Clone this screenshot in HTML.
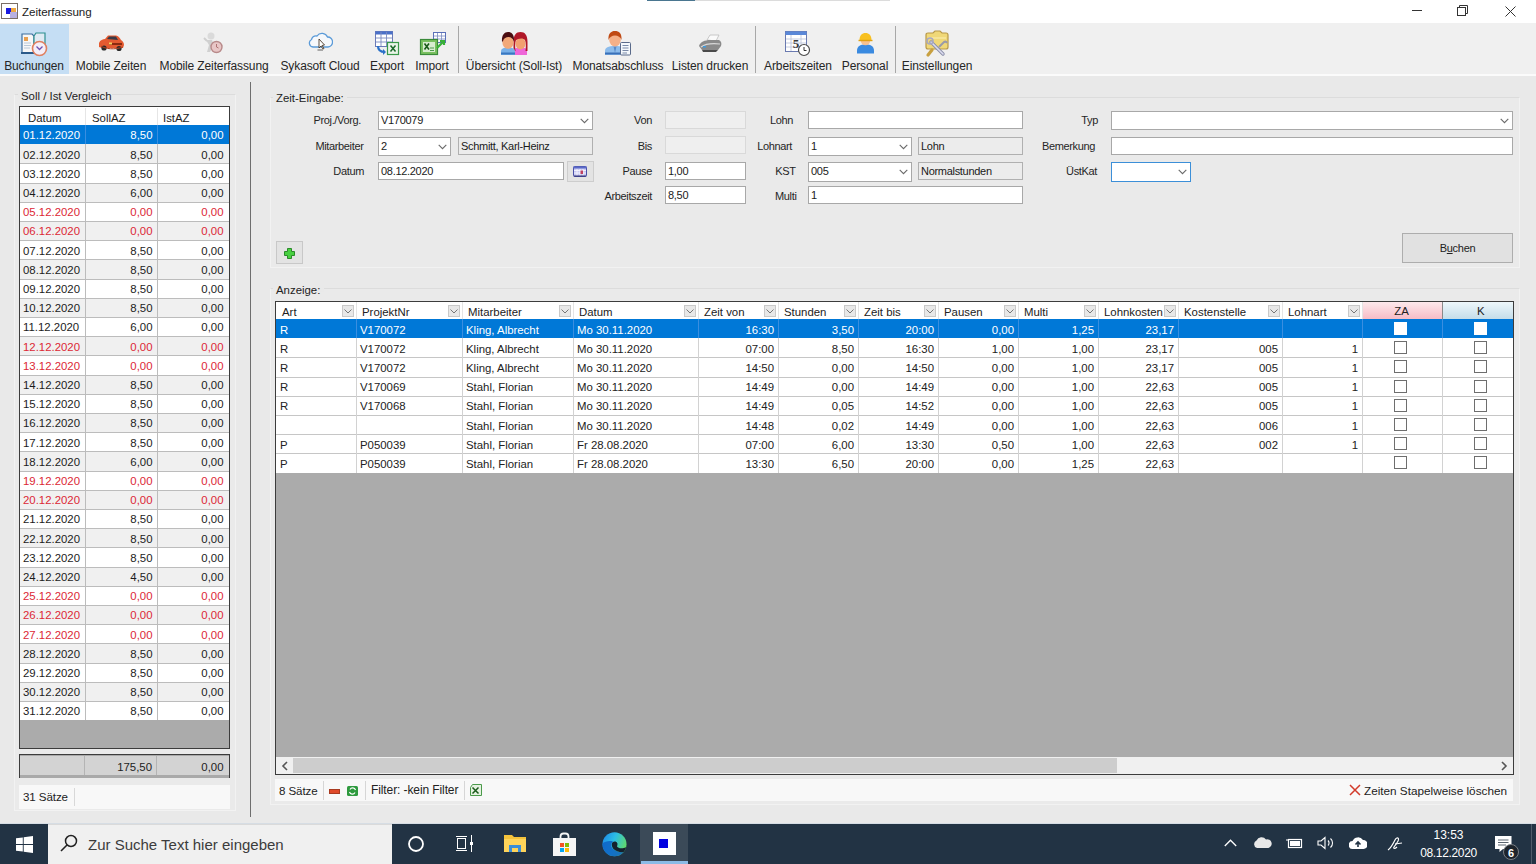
<!DOCTYPE html>
<html><head><meta charset="utf-8">
<style>
*{box-sizing:border-box;margin:0;padding:0}
html,body{width:1536px;height:864px;overflow:hidden;background:#e9e9e9;font-family:"Liberation Sans",sans-serif;color:#1a1a1a}
.a{position:absolute}
.t{position:absolute;white-space:nowrap}
</style></head><body>

<div class="a" style="left:0px;top:0px;width:1536px;height:23px;background:#fff"></div>
<div class="a" style="left:647px;top:0px;width:48px;height:1px;background:#4a7690"></div>
<div class="a" style="left:695px;top:0px;width:195px;height:1px;background:#dcdcdc"></div>
<div class="a" style="left:1px;top:3px;width:17px;height:16px;border:1px solid #7a6e66;background:#fff"></div>
<div class="a" style="left:6px;top:8px;width:5px;height:6px;background:#1a1ae0"></div>
<div class="a" style="left:11px;top:8px;width:5px;height:4px;background:#f0a840"></div>
<div class="a" style="left:10px;top:12px;width:7px;height:6px;background:#b8b0e0"></div>
<div class="t" style="left:22px;top:4.98px;font-size:11.6px;line-height:14px;color:#222;letter-spacing:-0.05px">Zeiterfassung</div>
<div class="a" style="left:1412px;top:10px;width:10px;height:1px;background:#333"></div>
<svg class="a" style="left:1457px;top:5px;" width="12" height="12" viewBox="0 0 12 12"><rect x="0.5" y="2.5" width="8" height="8" fill="none" stroke="#333"/><path d="M2.5 2.5V0.5H10.5V8.5H8.5" fill="none" stroke="#333"/></svg>
<svg class="a" style="left:1505px;top:6px;" width="11" height="11" viewBox="0 0 11 11"><path d="M0.5 0.5L10.5 10.5M10.5 0.5L0.5 10.5" stroke="#333" stroke-width="1"/></svg>
<div class="a" style="left:0px;top:23px;width:1536px;height:51px;background:#f0f0f0"></div>
<div class="a" style="left:0px;top:24px;width:69px;height:50px;background:#c5def4"></div>
<div class="a" style="left:0px;top:74px;width:1536px;height:2px;background:#fbfbfb"></div>
<div class="a" style="left:458px;top:26px;width:1px;height:47px;background:#a8a8a8"></div>
<div class="a" style="left:755px;top:26px;width:1px;height:47px;background:#a8a8a8"></div>
<div class="a" style="left:895px;top:26px;width:1px;height:47px;background:#a8a8a8"></div>
<div class="t" style="left:-36.0px;width:140px;text-align:center;top:58.84px;font-size:12px;line-height:15px;color:#262626;letter-spacing:-0.12px">Buchungen</div>
<div class="t" style="left:41.0px;width:140px;text-align:center;top:58.84px;font-size:12px;line-height:15px;color:#262626;letter-spacing:-0.12px">Mobile Zeiten</div>
<div class="t" style="left:144.0px;width:140px;text-align:center;top:58.84px;font-size:12px;line-height:15px;color:#262626;letter-spacing:-0.12px">Mobile Zeiterfassung</div>
<div class="t" style="left:250.0px;width:140px;text-align:center;top:58.84px;font-size:12px;line-height:15px;color:#262626;letter-spacing:-0.12px">Sykasoft Cloud</div>
<div class="t" style="left:317.0px;width:140px;text-align:center;top:58.84px;font-size:12px;line-height:15px;color:#262626;letter-spacing:-0.12px">Export</div>
<div class="t" style="left:362.0px;width:140px;text-align:center;top:58.84px;font-size:12px;line-height:15px;color:#262626;letter-spacing:-0.12px">Import</div>
<div class="t" style="left:444.0px;width:140px;text-align:center;top:58.84px;font-size:12px;line-height:15px;color:#262626;letter-spacing:-0.12px">Übersicht (Soll-Ist)</div>
<div class="t" style="left:548.0px;width:140px;text-align:center;top:58.84px;font-size:12px;line-height:15px;color:#262626;letter-spacing:-0.12px">Monatsabschluss</div>
<div class="t" style="left:640.0px;width:140px;text-align:center;top:58.84px;font-size:12px;line-height:15px;color:#262626;letter-spacing:-0.12px">Listen drucken</div>
<div class="t" style="left:728.0px;width:140px;text-align:center;top:58.84px;font-size:12px;line-height:15px;color:#262626;letter-spacing:-0.12px">Arbeitszeiten</div>
<div class="t" style="left:795.0px;width:140px;text-align:center;top:58.84px;font-size:12px;line-height:15px;color:#262626;letter-spacing:-0.12px">Personal</div>
<div class="t" style="left:867.0px;width:140px;text-align:center;top:58.84px;font-size:12px;line-height:15px;color:#262626;letter-spacing:-0.12px">Einstellungen</div>
<svg class="a" style="left:20px;top:31px" width="28" height="26" viewBox="0 0 28 26">
 <path d="M2 3H12L14 5V22H2Z" fill="#f7f7f7" stroke="#3d6e9e" stroke-width="1.2"/>
 <path d="M14 5L16 2H25V20H14Z" fill="#dfeaf3" stroke="#2f8f8f" stroke-width="1.2"/>
 <path d="M1 22H14" stroke="#2a5a8a" stroke-width="2"/>
 <rect x="4" y="6" width="4" height="4" fill="#e8a050"/>
 <path d="M4 12H11M4 14.5H11M4 17H10" stroke="#b8c8d8" stroke-width="1"/>
 <circle cx="19.5" cy="17.5" r="7" fill="#f4eef8" stroke="#e08060" stroke-width="1.6"/>
 <path d="M16.5 15.5L19.5 18.5L22.5 15.5" fill="none" stroke="#7050b0" stroke-width="1.3"/>
</svg>
<svg class="a" style="left:97px;top:34px" width="28" height="18" viewBox="0 0 28 18">
 <path d="M2 9C3 6 6 5 8 5L11 1.5H19C21 1.5 23 4 24 6C26 7 27 9 27 11L26 14H5L2 13Z" fill="#e45a30"/>
 <path d="M10 5L12 2.5H19L21 6Z" fill="#3a3a48"/>
 <path d="M12 9H25V11H12Z" fill="#8a2a10"/>
 <rect x="12" y="8.5" width="3" height="2" fill="#f4d060"/>
 <circle cx="7" cy="14" r="2.6" fill="#2a2a2a"/><circle cx="22" cy="14.5" r="2.6" fill="#2a2a2a"/>
 <path d="M4 12C8 15 18 16 26 13" fill="none" stroke="#b04020" stroke-width="1"/>
</svg>
<svg class="a" style="left:203px;top:32px" width="21" height="22" viewBox="0 0 21 22">
 <circle cx="8" cy="4" r="3.5" fill="#dadada"/>
 <path d="M3 8L9 8L11 13L7 20H4L6 13Z" fill="#d0d0d0"/>
 <path d="M1 6L4 9" stroke="#cfcfcf" stroke-width="2"/>
 <circle cx="13.5" cy="15" r="5.5" fill="#e8c6c6" stroke="#b88a8a" stroke-width="1.4"/>
 <path d="M13.5 12V15L15.5 16" fill="none" stroke="#a06060" stroke-width="0.8"/>
</svg>
<svg class="a" style="left:308px;top:31px" width="25" height="20" viewBox="0 0 25 20">
 <path d="M5 16A4 4 0 0 1 3.5 8.5A5 5 0 0 1 9 5A6 6 0 0 1 19.5 6A4.8 5 0 0 1 20 16Z" fill="#f6f8fb" stroke="#5a9ad8" stroke-width="1.3"/>
 <path d="M11 8L11 17L13 15L15 18L16 17.5L14 14.5L16.5 14Z" fill="#fff" stroke="#4a3a2a" stroke-width="0.9"/>
 <path d="M9.5 19H15" stroke="#777" stroke-width="1.2"/>
</svg>
<svg class="a" style="left:374px;top:30px" width="26" height="26" viewBox="0 0 26 26">
 <rect x="1.5" y="1.5" width="17" height="15" fill="#fff" stroke="#6a7ab8" stroke-width="1"/>
 <rect x="1.5" y="1.5" width="17" height="3" fill="#4a70c8"/>
 <path d="M2 8H18M2 12H18M7 2V16M12.5 2V16" stroke="#7a8ac0" stroke-width="0.9"/>
 <path d="M4 16C4 20 7 22 11 22" fill="none" stroke="#2a70c8" stroke-width="2.2"/>
 <path d="M9 19L12 22L9 25Z" fill="#2a70c8"/>
 <rect x="13.5" y="12.5" width="11" height="12" fill="#eaf4e8" stroke="#3a9a4a" stroke-width="1.2"/>
 <path d="M16.5 15.5L21.5 21.5M21.5 15.5L16.5 21.5" stroke="#1a6a2a" stroke-width="1.5"/>
</svg>
<svg class="a" style="left:419px;top:31px" width="28" height="26" viewBox="0 0 28 26">
 <rect x="14.5" y="1.5" width="12" height="10" fill="#fff" stroke="#5a70b8" stroke-width="1"/>
 <path d="M15 5H26M15 8H26M18.5 2V11M22.5 2V11" stroke="#7a8ac0" stroke-width="0.8"/>
 <rect x="1.5" y="8.5" width="17" height="15" fill="#7ac060" stroke="#3a8a3a" stroke-width="1.2"/>
 <rect x="4" y="11" width="12" height="10" fill="#d8ecd0"/>
 <path d="M5.5 12.5L10 18.5M10 12.5L5.5 18.5" stroke="#1a5a1a" stroke-width="1.6"/>
 <path d="M11 17H15M11 19.5H15" stroke="#4a9a4a" stroke-width="1"/>
 <path d="M18 17L25 10M21 10H25V14" fill="none" stroke="#38b038" stroke-width="2.2"/>
</svg>
<svg class="a" style="left:500px;top:31px" width="28" height="25" viewBox="0 0 28 25">
 <path d="M14 24V20C14 17.5 16 16.5 20.5 16.5C25 16.5 27 17.5 27 20V24Z" fill="#ee66d8"/>
 <path d="M13.5 11C13.5 4 16 1 20.5 1C25 1 27.5 4 27.5 11V20H25.5C26 16 26 12 25 9C23 7 18 7 16 9C15 12 15 16 15.5 20H13.5Z" fill="#b01828"/>
 <ellipse cx="20.5" cy="12.5" rx="5" ry="6" fill="#f2a070"/>
 <path d="M15 9C16 5 18.5 4 20.5 4C23.5 4 25.5 5.5 26 9C24 7.5 21 7 18 8C17 8.5 16 9 15 9Z" fill="#b01828"/>
 <path d="M1 24V20.5C1 17.5 3.5 16.5 8 16.5C12.5 16.5 15 17.5 15 20.5V24Z" fill="#78b0e8"/>
 <path d="M1 22.5H15" stroke="#3a78c0" stroke-width="2"/>
 <ellipse cx="8" cy="11.5" rx="5.6" ry="6.3" fill="#f2a878"/>
 <path d="M2 11C1.5 4.5 4 1 8 1C12 1 14.5 4 14 10.5C13 7.5 11 6 8.5 6C6 6 4 7 3 10Z" fill="#4a0c10"/>
</svg>
<svg class="a" style="left:604px;top:30px" width="28" height="26" viewBox="0 0 28 26">
 <path d="M1 25V21C1 17.5 4 16 11 16C18 16 21 17.5 21 21V25Z" fill="#8cbcec"/>
 <path d="M1 23.5H21" stroke="#3a70b8" stroke-width="2"/>
 <path d="M9.5 16.5L11 23L12.5 16.5Z" fill="#5a8ac8"/>
 <ellipse cx="11" cy="10" rx="5.8" ry="6.5" fill="#f4b088"/>
 <path d="M4.5 10C4 3.5 7 1 11 1C15 1 18 3 17.5 10C16.5 7 14 5.5 11 5.5C8 5.5 5.5 7 4.5 10Z" fill="#c04a14"/>
 <rect x="16.5" y="12.5" width="10" height="12.5" rx="1" fill="#f4f8fc" stroke="#5a6a8a" stroke-width="1"/>
 <path d="M18.5 15.5H24.5M18.5 18H24.5M18.5 20.5H24.5M18.5 23H23" stroke="#7a8aa8" stroke-width="1"/>
</svg>
<svg class="a" style="left:697px;top:34px" width="26" height="19" viewBox="0 0 26 19">
 <path d="M10 6L13 1H22L19 7Z" fill="#fafafa" stroke="#bdbdbd" stroke-width="0.8"/>
 <path d="M2 12C3 8 8 6 13 6H22C24 7 25 9 24 12L21 16H5Z" fill="#8a8a8a"/>
 <path d="M4 13C8 10 14 9 23 10" fill="none" stroke="#d8d8d8" stroke-width="1.2"/>
 <path d="M5 16H21L19 18H6Z" fill="#4a4a4a"/>
 <rect x="6" y="12" width="3" height="1.5" fill="#3a9ae0"/>
</svg>
<svg class="a" style="left:784px;top:30px" width="27" height="27" viewBox="0 0 27 27">
 <rect x="1.5" y="1.5" width="21" height="20" fill="#fff" stroke="#6a7ab0" stroke-width="1"/>
 <rect x="1.5" y="1.5" width="21" height="3.5" fill="#5a88d8"/>
 <path d="M2 9H22M2 13H22M2 17H22M7 5V21M17 5V21" stroke="#b8c0d8" stroke-width="0.8"/>
 <text x="12" y="18" font-family="Liberation Serif" font-weight="bold" font-size="13" text-anchor="middle" fill="#3a3a3a">5</text>
 <circle cx="20" cy="20" r="5.5" fill="#fff" stroke="#4a4a4a" stroke-width="1.2"/>
 <path d="M20 17V20.5H22.5" fill="none" stroke="#333" stroke-width="1"/>
</svg>
<svg class="a" style="left:856px;top:32px" width="19" height="22" viewBox="0 0 19 22">
 <path d="M1 19C1 14 4 12.5 9.5 12.5C15 12.5 18 14 18 19V21.5H1Z" fill="#3a8ae0"/>
 <circle cx="9.5" cy="8.5" r="4.8" fill="#f6c090"/>
 <path d="M3.5 8.5C3.5 3 6 1 9.5 1C13 1 15.5 3 15.5 8.5Z" fill="#f8c020"/>
 <path d="M2.5 8.5H16.5" stroke="#e0a010" stroke-width="1.4"/>
</svg>
<svg class="a" style="left:923px;top:30px" width="28" height="28" viewBox="0 0 28 28">
 <path d="M3 5Q3 3 5 3H10L12 1H17L19 3H23Q25 3 25 5V17Q25 19 23 19H5Q3 19 3 17Z" fill="#f0d878" stroke="#b89848" stroke-width="1.2"/>
 <path d="M5 8H23" stroke="#f8e8a0" stroke-width="1.5"/>
 <path d="M9 20L5 25" stroke="#c8a040" stroke-width="3.2" stroke-linecap="round"/>
 <path d="M8 12L20 24" stroke="#8a8ea8" stroke-width="3.4" stroke-linecap="round"/>
 <path d="M8 12L20 24" stroke="#dcdcf0" stroke-width="1.6" stroke-linecap="round"/>
 <circle cx="7" cy="11" r="3" fill="none" stroke="#a8a8c0" stroke-width="1.6"/>
 <path d="M16 17L21 12Q23 11 24 13" fill="none" stroke="#9a9aa8" stroke-width="2"/>
</svg>

<div class="a" style="left:0px;top:76px;width:1536px;height:748px;background:#e9e9e9"></div>
<div class="a" style="left:250px;top:82px;width:1px;height:735px;background:#6e6e6e"></div>
<div class="a" style="left:14px;top:94px;width:222px;height:717px;background:#eaeaea;border:1px solid #f2f2f2;border-top-color:#dcdcdc"></div>
<div class="a" style="left:18px;top:90px;width:94px;height:8px;background:#e9e9e9"></div>
<div class="t" style="left:21px;top:88.55px;font-size:11.4px;line-height:14px;color:#222;">Soll / Ist Vergleich</div>
<div class="a" style="left:19px;top:106px;width:211px;height:643px;background:#ababab;border:1px solid #3c3c3c"></div>
<div class="a" style="left:20px;top:107px;width:209px;height:18px;background:#fff"></div>
<div class="a" style="left:85px;top:108px;width:1px;height:17px;background:#e6e6e6"></div>
<div class="a" style="left:157px;top:108px;width:1px;height:17px;background:#e6e6e6"></div>
<div class="t" style="left:28px;top:110.85px;font-size:11.4px;line-height:14px;color:#222;">Datum</div>
<div class="t" style="left:92px;top:110.85px;font-size:11.4px;line-height:14px;color:#222;">SollAZ</div>
<div class="t" style="left:163px;top:110.85px;font-size:11.4px;line-height:14px;color:#222;">IstAZ</div>
<div class="a" style="left:20px;top:125px;width:209px;height:19px;background:#0078d7"></div>
<div class="a" style="left:85px;top:125px;width:1px;height:19px;background:#3a8ee0"></div>
<div class="a" style="left:157px;top:125px;width:1px;height:19px;background:#3a8ee0"></div>
<div class="t" style="left:23px;top:128.45px;font-size:11.4px;line-height:14px;color:#fff;">01.12.2020</div>
<div class="t" style="left:92.5px;width:60px;text-align:right;top:128.45px;font-size:11.4px;line-height:14px;color:#fff;">8,50</div>
<div class="t" style="left:163.5px;width:60px;text-align:right;top:128.45px;font-size:11.4px;line-height:14px;color:#fff;">0,00</div>
<div class="a" style="left:20px;top:144px;width:209px;height:19px;background:#f0f0f0"></div>
<div class="a" style="left:85px;top:144px;width:1px;height:19px;background:#bcbcbc"></div>
<div class="a" style="left:157px;top:144px;width:1px;height:19px;background:#bcbcbc"></div>
<div class="t" style="left:23px;top:147.65px;font-size:11.4px;line-height:14px;color:#1c1c1c;">02.12.2020</div>
<div class="t" style="left:92.5px;width:60px;text-align:right;top:147.65px;font-size:11.4px;line-height:14px;color:#1c1c1c;">8,50</div>
<div class="t" style="left:163.5px;width:60px;text-align:right;top:147.65px;font-size:11.4px;line-height:14px;color:#1c1c1c;">0,00</div>
<div class="a" style="left:20px;top:163px;width:209px;height:20px;background:#fff"></div>
<div class="a" style="left:20px;top:163px;width:209px;height:1px;background:#bcbcbc"></div>
<div class="a" style="left:85px;top:163px;width:1px;height:20px;background:#bcbcbc"></div>
<div class="a" style="left:157px;top:163px;width:1px;height:20px;background:#bcbcbc"></div>
<div class="t" style="left:23px;top:166.85px;font-size:11.4px;line-height:14px;color:#1c1c1c;">03.12.2020</div>
<div class="t" style="left:92.5px;width:60px;text-align:right;top:166.85px;font-size:11.4px;line-height:14px;color:#1c1c1c;">8,50</div>
<div class="t" style="left:163.5px;width:60px;text-align:right;top:166.85px;font-size:11.4px;line-height:14px;color:#1c1c1c;">0,00</div>
<div class="a" style="left:20px;top:183px;width:209px;height:19px;background:#f0f0f0"></div>
<div class="a" style="left:20px;top:183px;width:209px;height:1px;background:#bcbcbc"></div>
<div class="a" style="left:85px;top:183px;width:1px;height:19px;background:#bcbcbc"></div>
<div class="a" style="left:157px;top:183px;width:1px;height:19px;background:#bcbcbc"></div>
<div class="t" style="left:23px;top:186.05px;font-size:11.4px;line-height:14px;color:#1c1c1c;">04.12.2020</div>
<div class="t" style="left:92.5px;width:60px;text-align:right;top:186.05px;font-size:11.4px;line-height:14px;color:#1c1c1c;">6,00</div>
<div class="t" style="left:163.5px;width:60px;text-align:right;top:186.05px;font-size:11.4px;line-height:14px;color:#1c1c1c;">0,00</div>
<div class="a" style="left:20px;top:202px;width:209px;height:19px;background:#fff"></div>
<div class="a" style="left:20px;top:202px;width:209px;height:1px;background:#bcbcbc"></div>
<div class="a" style="left:85px;top:202px;width:1px;height:19px;background:#bcbcbc"></div>
<div class="a" style="left:157px;top:202px;width:1px;height:19px;background:#bcbcbc"></div>
<div class="t" style="left:23px;top:205.25px;font-size:11.4px;line-height:14px;color:#dc2836;">05.12.2020</div>
<div class="t" style="left:92.5px;width:60px;text-align:right;top:205.25px;font-size:11.4px;line-height:14px;color:#dc2836;">0,00</div>
<div class="t" style="left:163.5px;width:60px;text-align:right;top:205.25px;font-size:11.4px;line-height:14px;color:#dc2836;">0,00</div>
<div class="a" style="left:20px;top:221px;width:209px;height:19px;background:#f0f0f0"></div>
<div class="a" style="left:20px;top:221px;width:209px;height:1px;background:#bcbcbc"></div>
<div class="a" style="left:85px;top:221px;width:1px;height:19px;background:#bcbcbc"></div>
<div class="a" style="left:157px;top:221px;width:1px;height:19px;background:#bcbcbc"></div>
<div class="t" style="left:23px;top:224.45px;font-size:11.4px;line-height:14px;color:#dc2836;">06.12.2020</div>
<div class="t" style="left:92.5px;width:60px;text-align:right;top:224.45px;font-size:11.4px;line-height:14px;color:#dc2836;">0,00</div>
<div class="t" style="left:163.5px;width:60px;text-align:right;top:224.45px;font-size:11.4px;line-height:14px;color:#dc2836;">0,00</div>
<div class="a" style="left:20px;top:240px;width:209px;height:19px;background:#fff"></div>
<div class="a" style="left:20px;top:240px;width:209px;height:1px;background:#bcbcbc"></div>
<div class="a" style="left:85px;top:240px;width:1px;height:19px;background:#bcbcbc"></div>
<div class="a" style="left:157px;top:240px;width:1px;height:19px;background:#bcbcbc"></div>
<div class="t" style="left:23px;top:243.65px;font-size:11.4px;line-height:14px;color:#1c1c1c;">07.12.2020</div>
<div class="t" style="left:92.5px;width:60px;text-align:right;top:243.65px;font-size:11.4px;line-height:14px;color:#1c1c1c;">8,50</div>
<div class="t" style="left:163.5px;width:60px;text-align:right;top:243.65px;font-size:11.4px;line-height:14px;color:#1c1c1c;">0,00</div>
<div class="a" style="left:20px;top:259px;width:209px;height:20px;background:#f0f0f0"></div>
<div class="a" style="left:20px;top:259px;width:209px;height:1px;background:#bcbcbc"></div>
<div class="a" style="left:85px;top:259px;width:1px;height:20px;background:#bcbcbc"></div>
<div class="a" style="left:157px;top:259px;width:1px;height:20px;background:#bcbcbc"></div>
<div class="t" style="left:23px;top:262.85px;font-size:11.4px;line-height:14px;color:#1c1c1c;">08.12.2020</div>
<div class="t" style="left:92.5px;width:60px;text-align:right;top:262.85px;font-size:11.4px;line-height:14px;color:#1c1c1c;">8,50</div>
<div class="t" style="left:163.5px;width:60px;text-align:right;top:262.85px;font-size:11.4px;line-height:14px;color:#1c1c1c;">0,00</div>
<div class="a" style="left:20px;top:279px;width:209px;height:19px;background:#fff"></div>
<div class="a" style="left:20px;top:279px;width:209px;height:1px;background:#bcbcbc"></div>
<div class="a" style="left:85px;top:279px;width:1px;height:19px;background:#bcbcbc"></div>
<div class="a" style="left:157px;top:279px;width:1px;height:19px;background:#bcbcbc"></div>
<div class="t" style="left:23px;top:282.05px;font-size:11.4px;line-height:14px;color:#1c1c1c;">09.12.2020</div>
<div class="t" style="left:92.5px;width:60px;text-align:right;top:282.05px;font-size:11.4px;line-height:14px;color:#1c1c1c;">8,50</div>
<div class="t" style="left:163.5px;width:60px;text-align:right;top:282.05px;font-size:11.4px;line-height:14px;color:#1c1c1c;">0,00</div>
<div class="a" style="left:20px;top:298px;width:209px;height:19px;background:#f0f0f0"></div>
<div class="a" style="left:20px;top:298px;width:209px;height:1px;background:#bcbcbc"></div>
<div class="a" style="left:85px;top:298px;width:1px;height:19px;background:#bcbcbc"></div>
<div class="a" style="left:157px;top:298px;width:1px;height:19px;background:#bcbcbc"></div>
<div class="t" style="left:23px;top:301.25px;font-size:11.4px;line-height:14px;color:#1c1c1c;">10.12.2020</div>
<div class="t" style="left:92.5px;width:60px;text-align:right;top:301.25px;font-size:11.4px;line-height:14px;color:#1c1c1c;">8,50</div>
<div class="t" style="left:163.5px;width:60px;text-align:right;top:301.25px;font-size:11.4px;line-height:14px;color:#1c1c1c;">0,00</div>
<div class="a" style="left:20px;top:317px;width:209px;height:19px;background:#fff"></div>
<div class="a" style="left:20px;top:317px;width:209px;height:1px;background:#bcbcbc"></div>
<div class="a" style="left:85px;top:317px;width:1px;height:19px;background:#bcbcbc"></div>
<div class="a" style="left:157px;top:317px;width:1px;height:19px;background:#bcbcbc"></div>
<div class="t" style="left:23px;top:320.45px;font-size:11.4px;line-height:14px;color:#1c1c1c;">11.12.2020</div>
<div class="t" style="left:92.5px;width:60px;text-align:right;top:320.45px;font-size:11.4px;line-height:14px;color:#1c1c1c;">6,00</div>
<div class="t" style="left:163.5px;width:60px;text-align:right;top:320.45px;font-size:11.4px;line-height:14px;color:#1c1c1c;">0,00</div>
<div class="a" style="left:20px;top:336px;width:209px;height:19px;background:#f0f0f0"></div>
<div class="a" style="left:20px;top:336px;width:209px;height:1px;background:#bcbcbc"></div>
<div class="a" style="left:85px;top:336px;width:1px;height:19px;background:#bcbcbc"></div>
<div class="a" style="left:157px;top:336px;width:1px;height:19px;background:#bcbcbc"></div>
<div class="t" style="left:23px;top:339.65px;font-size:11.4px;line-height:14px;color:#dc2836;">12.12.2020</div>
<div class="t" style="left:92.5px;width:60px;text-align:right;top:339.65px;font-size:11.4px;line-height:14px;color:#dc2836;">0,00</div>
<div class="t" style="left:163.5px;width:60px;text-align:right;top:339.65px;font-size:11.4px;line-height:14px;color:#dc2836;">0,00</div>
<div class="a" style="left:20px;top:355px;width:209px;height:20px;background:#fff"></div>
<div class="a" style="left:20px;top:355px;width:209px;height:1px;background:#bcbcbc"></div>
<div class="a" style="left:85px;top:355px;width:1px;height:20px;background:#bcbcbc"></div>
<div class="a" style="left:157px;top:355px;width:1px;height:20px;background:#bcbcbc"></div>
<div class="t" style="left:23px;top:358.85px;font-size:11.4px;line-height:14px;color:#dc2836;">13.12.2020</div>
<div class="t" style="left:92.5px;width:60px;text-align:right;top:358.85px;font-size:11.4px;line-height:14px;color:#dc2836;">0,00</div>
<div class="t" style="left:163.5px;width:60px;text-align:right;top:358.85px;font-size:11.4px;line-height:14px;color:#dc2836;">0,00</div>
<div class="a" style="left:20px;top:375px;width:209px;height:19px;background:#f0f0f0"></div>
<div class="a" style="left:20px;top:375px;width:209px;height:1px;background:#bcbcbc"></div>
<div class="a" style="left:85px;top:375px;width:1px;height:19px;background:#bcbcbc"></div>
<div class="a" style="left:157px;top:375px;width:1px;height:19px;background:#bcbcbc"></div>
<div class="t" style="left:23px;top:378.05px;font-size:11.4px;line-height:14px;color:#1c1c1c;">14.12.2020</div>
<div class="t" style="left:92.5px;width:60px;text-align:right;top:378.05px;font-size:11.4px;line-height:14px;color:#1c1c1c;">8,50</div>
<div class="t" style="left:163.5px;width:60px;text-align:right;top:378.05px;font-size:11.4px;line-height:14px;color:#1c1c1c;">0,00</div>
<div class="a" style="left:20px;top:394px;width:209px;height:19px;background:#fff"></div>
<div class="a" style="left:20px;top:394px;width:209px;height:1px;background:#bcbcbc"></div>
<div class="a" style="left:85px;top:394px;width:1px;height:19px;background:#bcbcbc"></div>
<div class="a" style="left:157px;top:394px;width:1px;height:19px;background:#bcbcbc"></div>
<div class="t" style="left:23px;top:397.25px;font-size:11.4px;line-height:14px;color:#1c1c1c;">15.12.2020</div>
<div class="t" style="left:92.5px;width:60px;text-align:right;top:397.25px;font-size:11.4px;line-height:14px;color:#1c1c1c;">8,50</div>
<div class="t" style="left:163.5px;width:60px;text-align:right;top:397.25px;font-size:11.4px;line-height:14px;color:#1c1c1c;">0,00</div>
<div class="a" style="left:20px;top:413px;width:209px;height:19px;background:#f0f0f0"></div>
<div class="a" style="left:20px;top:413px;width:209px;height:1px;background:#bcbcbc"></div>
<div class="a" style="left:85px;top:413px;width:1px;height:19px;background:#bcbcbc"></div>
<div class="a" style="left:157px;top:413px;width:1px;height:19px;background:#bcbcbc"></div>
<div class="t" style="left:23px;top:416.45px;font-size:11.4px;line-height:14px;color:#1c1c1c;">16.12.2020</div>
<div class="t" style="left:92.5px;width:60px;text-align:right;top:416.45px;font-size:11.4px;line-height:14px;color:#1c1c1c;">8,50</div>
<div class="t" style="left:163.5px;width:60px;text-align:right;top:416.45px;font-size:11.4px;line-height:14px;color:#1c1c1c;">0,00</div>
<div class="a" style="left:20px;top:432px;width:209px;height:19px;background:#fff"></div>
<div class="a" style="left:20px;top:432px;width:209px;height:1px;background:#bcbcbc"></div>
<div class="a" style="left:85px;top:432px;width:1px;height:19px;background:#bcbcbc"></div>
<div class="a" style="left:157px;top:432px;width:1px;height:19px;background:#bcbcbc"></div>
<div class="t" style="left:23px;top:435.65px;font-size:11.4px;line-height:14px;color:#1c1c1c;">17.12.2020</div>
<div class="t" style="left:92.5px;width:60px;text-align:right;top:435.65px;font-size:11.4px;line-height:14px;color:#1c1c1c;">8,50</div>
<div class="t" style="left:163.5px;width:60px;text-align:right;top:435.65px;font-size:11.4px;line-height:14px;color:#1c1c1c;">0,00</div>
<div class="a" style="left:20px;top:451px;width:209px;height:20px;background:#f0f0f0"></div>
<div class="a" style="left:20px;top:451px;width:209px;height:1px;background:#bcbcbc"></div>
<div class="a" style="left:85px;top:451px;width:1px;height:20px;background:#bcbcbc"></div>
<div class="a" style="left:157px;top:451px;width:1px;height:20px;background:#bcbcbc"></div>
<div class="t" style="left:23px;top:454.85px;font-size:11.4px;line-height:14px;color:#1c1c1c;">18.12.2020</div>
<div class="t" style="left:92.5px;width:60px;text-align:right;top:454.85px;font-size:11.4px;line-height:14px;color:#1c1c1c;">6,00</div>
<div class="t" style="left:163.5px;width:60px;text-align:right;top:454.85px;font-size:11.4px;line-height:14px;color:#1c1c1c;">0,00</div>
<div class="a" style="left:20px;top:471px;width:209px;height:19px;background:#fff"></div>
<div class="a" style="left:20px;top:471px;width:209px;height:1px;background:#bcbcbc"></div>
<div class="a" style="left:85px;top:471px;width:1px;height:19px;background:#bcbcbc"></div>
<div class="a" style="left:157px;top:471px;width:1px;height:19px;background:#bcbcbc"></div>
<div class="t" style="left:23px;top:474.05px;font-size:11.4px;line-height:14px;color:#dc2836;">19.12.2020</div>
<div class="t" style="left:92.5px;width:60px;text-align:right;top:474.05px;font-size:11.4px;line-height:14px;color:#dc2836;">0,00</div>
<div class="t" style="left:163.5px;width:60px;text-align:right;top:474.05px;font-size:11.4px;line-height:14px;color:#dc2836;">0,00</div>
<div class="a" style="left:20px;top:490px;width:209px;height:19px;background:#f0f0f0"></div>
<div class="a" style="left:20px;top:490px;width:209px;height:1px;background:#bcbcbc"></div>
<div class="a" style="left:85px;top:490px;width:1px;height:19px;background:#bcbcbc"></div>
<div class="a" style="left:157px;top:490px;width:1px;height:19px;background:#bcbcbc"></div>
<div class="t" style="left:23px;top:493.25px;font-size:11.4px;line-height:14px;color:#dc2836;">20.12.2020</div>
<div class="t" style="left:92.5px;width:60px;text-align:right;top:493.25px;font-size:11.4px;line-height:14px;color:#dc2836;">0,00</div>
<div class="t" style="left:163.5px;width:60px;text-align:right;top:493.25px;font-size:11.4px;line-height:14px;color:#dc2836;">0,00</div>
<div class="a" style="left:20px;top:509px;width:209px;height:19px;background:#fff"></div>
<div class="a" style="left:20px;top:509px;width:209px;height:1px;background:#bcbcbc"></div>
<div class="a" style="left:85px;top:509px;width:1px;height:19px;background:#bcbcbc"></div>
<div class="a" style="left:157px;top:509px;width:1px;height:19px;background:#bcbcbc"></div>
<div class="t" style="left:23px;top:512.45px;font-size:11.4px;line-height:14px;color:#1c1c1c;">21.12.2020</div>
<div class="t" style="left:92.5px;width:60px;text-align:right;top:512.45px;font-size:11.4px;line-height:14px;color:#1c1c1c;">8,50</div>
<div class="t" style="left:163.5px;width:60px;text-align:right;top:512.45px;font-size:11.4px;line-height:14px;color:#1c1c1c;">0,00</div>
<div class="a" style="left:20px;top:528px;width:209px;height:19px;background:#f0f0f0"></div>
<div class="a" style="left:20px;top:528px;width:209px;height:1px;background:#bcbcbc"></div>
<div class="a" style="left:85px;top:528px;width:1px;height:19px;background:#bcbcbc"></div>
<div class="a" style="left:157px;top:528px;width:1px;height:19px;background:#bcbcbc"></div>
<div class="t" style="left:23px;top:531.65px;font-size:11.4px;line-height:14px;color:#1c1c1c;">22.12.2020</div>
<div class="t" style="left:92.5px;width:60px;text-align:right;top:531.65px;font-size:11.4px;line-height:14px;color:#1c1c1c;">8,50</div>
<div class="t" style="left:163.5px;width:60px;text-align:right;top:531.65px;font-size:11.4px;line-height:14px;color:#1c1c1c;">0,00</div>
<div class="a" style="left:20px;top:547px;width:209px;height:20px;background:#fff"></div>
<div class="a" style="left:20px;top:547px;width:209px;height:1px;background:#bcbcbc"></div>
<div class="a" style="left:85px;top:547px;width:1px;height:20px;background:#bcbcbc"></div>
<div class="a" style="left:157px;top:547px;width:1px;height:20px;background:#bcbcbc"></div>
<div class="t" style="left:23px;top:550.85px;font-size:11.4px;line-height:14px;color:#1c1c1c;">23.12.2020</div>
<div class="t" style="left:92.5px;width:60px;text-align:right;top:550.85px;font-size:11.4px;line-height:14px;color:#1c1c1c;">8,50</div>
<div class="t" style="left:163.5px;width:60px;text-align:right;top:550.85px;font-size:11.4px;line-height:14px;color:#1c1c1c;">0,00</div>
<div class="a" style="left:20px;top:567px;width:209px;height:19px;background:#f0f0f0"></div>
<div class="a" style="left:20px;top:567px;width:209px;height:1px;background:#bcbcbc"></div>
<div class="a" style="left:85px;top:567px;width:1px;height:19px;background:#bcbcbc"></div>
<div class="a" style="left:157px;top:567px;width:1px;height:19px;background:#bcbcbc"></div>
<div class="t" style="left:23px;top:570.05px;font-size:11.4px;line-height:14px;color:#1c1c1c;">24.12.2020</div>
<div class="t" style="left:92.5px;width:60px;text-align:right;top:570.05px;font-size:11.4px;line-height:14px;color:#1c1c1c;">4,50</div>
<div class="t" style="left:163.5px;width:60px;text-align:right;top:570.05px;font-size:11.4px;line-height:14px;color:#1c1c1c;">0,00</div>
<div class="a" style="left:20px;top:586px;width:209px;height:19px;background:#fff"></div>
<div class="a" style="left:20px;top:586px;width:209px;height:1px;background:#bcbcbc"></div>
<div class="a" style="left:85px;top:586px;width:1px;height:19px;background:#bcbcbc"></div>
<div class="a" style="left:157px;top:586px;width:1px;height:19px;background:#bcbcbc"></div>
<div class="t" style="left:23px;top:589.25px;font-size:11.4px;line-height:14px;color:#dc2836;">25.12.2020</div>
<div class="t" style="left:92.5px;width:60px;text-align:right;top:589.25px;font-size:11.4px;line-height:14px;color:#dc2836;">0,00</div>
<div class="t" style="left:163.5px;width:60px;text-align:right;top:589.25px;font-size:11.4px;line-height:14px;color:#dc2836;">0,00</div>
<div class="a" style="left:20px;top:605px;width:209px;height:19px;background:#f0f0f0"></div>
<div class="a" style="left:20px;top:605px;width:209px;height:1px;background:#bcbcbc"></div>
<div class="a" style="left:85px;top:605px;width:1px;height:19px;background:#bcbcbc"></div>
<div class="a" style="left:157px;top:605px;width:1px;height:19px;background:#bcbcbc"></div>
<div class="t" style="left:23px;top:608.45px;font-size:11.4px;line-height:14px;color:#dc2836;">26.12.2020</div>
<div class="t" style="left:92.5px;width:60px;text-align:right;top:608.45px;font-size:11.4px;line-height:14px;color:#dc2836;">0,00</div>
<div class="t" style="left:163.5px;width:60px;text-align:right;top:608.45px;font-size:11.4px;line-height:14px;color:#dc2836;">0,00</div>
<div class="a" style="left:20px;top:624px;width:209px;height:19px;background:#fff"></div>
<div class="a" style="left:20px;top:624px;width:209px;height:1px;background:#bcbcbc"></div>
<div class="a" style="left:85px;top:624px;width:1px;height:19px;background:#bcbcbc"></div>
<div class="a" style="left:157px;top:624px;width:1px;height:19px;background:#bcbcbc"></div>
<div class="t" style="left:23px;top:627.65px;font-size:11.4px;line-height:14px;color:#dc2836;">27.12.2020</div>
<div class="t" style="left:92.5px;width:60px;text-align:right;top:627.65px;font-size:11.4px;line-height:14px;color:#dc2836;">0,00</div>
<div class="t" style="left:163.5px;width:60px;text-align:right;top:627.65px;font-size:11.4px;line-height:14px;color:#dc2836;">0,00</div>
<div class="a" style="left:20px;top:643px;width:209px;height:20px;background:#f0f0f0"></div>
<div class="a" style="left:20px;top:643px;width:209px;height:1px;background:#bcbcbc"></div>
<div class="a" style="left:85px;top:643px;width:1px;height:20px;background:#bcbcbc"></div>
<div class="a" style="left:157px;top:643px;width:1px;height:20px;background:#bcbcbc"></div>
<div class="t" style="left:23px;top:646.85px;font-size:11.4px;line-height:14px;color:#1c1c1c;">28.12.2020</div>
<div class="t" style="left:92.5px;width:60px;text-align:right;top:646.85px;font-size:11.4px;line-height:14px;color:#1c1c1c;">8,50</div>
<div class="t" style="left:163.5px;width:60px;text-align:right;top:646.85px;font-size:11.4px;line-height:14px;color:#1c1c1c;">0,00</div>
<div class="a" style="left:20px;top:663px;width:209px;height:19px;background:#fff"></div>
<div class="a" style="left:20px;top:663px;width:209px;height:1px;background:#bcbcbc"></div>
<div class="a" style="left:85px;top:663px;width:1px;height:19px;background:#bcbcbc"></div>
<div class="a" style="left:157px;top:663px;width:1px;height:19px;background:#bcbcbc"></div>
<div class="t" style="left:23px;top:666.05px;font-size:11.4px;line-height:14px;color:#1c1c1c;">29.12.2020</div>
<div class="t" style="left:92.5px;width:60px;text-align:right;top:666.05px;font-size:11.4px;line-height:14px;color:#1c1c1c;">8,50</div>
<div class="t" style="left:163.5px;width:60px;text-align:right;top:666.05px;font-size:11.4px;line-height:14px;color:#1c1c1c;">0,00</div>
<div class="a" style="left:20px;top:682px;width:209px;height:19px;background:#f0f0f0"></div>
<div class="a" style="left:20px;top:682px;width:209px;height:1px;background:#bcbcbc"></div>
<div class="a" style="left:85px;top:682px;width:1px;height:19px;background:#bcbcbc"></div>
<div class="a" style="left:157px;top:682px;width:1px;height:19px;background:#bcbcbc"></div>
<div class="t" style="left:23px;top:685.25px;font-size:11.4px;line-height:14px;color:#1c1c1c;">30.12.2020</div>
<div class="t" style="left:92.5px;width:60px;text-align:right;top:685.25px;font-size:11.4px;line-height:14px;color:#1c1c1c;">8,50</div>
<div class="t" style="left:163.5px;width:60px;text-align:right;top:685.25px;font-size:11.4px;line-height:14px;color:#1c1c1c;">0,00</div>
<div class="a" style="left:20px;top:701px;width:209px;height:19px;background:#fff"></div>
<div class="a" style="left:20px;top:701px;width:209px;height:1px;background:#bcbcbc"></div>
<div class="a" style="left:85px;top:701px;width:1px;height:19px;background:#bcbcbc"></div>
<div class="a" style="left:157px;top:701px;width:1px;height:19px;background:#bcbcbc"></div>
<div class="t" style="left:23px;top:704.45px;font-size:11.4px;line-height:14px;color:#1c1c1c;">31.12.2020</div>
<div class="t" style="left:92.5px;width:60px;text-align:right;top:704.45px;font-size:11.4px;line-height:14px;color:#1c1c1c;">8,50</div>
<div class="t" style="left:163.5px;width:60px;text-align:right;top:704.45px;font-size:11.4px;line-height:14px;color:#1c1c1c;">0,00</div>
<div class="a" style="left:19px;top:754px;width:211px;height:24px;background:#a9a9a9;border:1px solid #3c3c3c;border-bottom:none"></div>
<div class="a" style="left:20px;top:756px;width:209px;height:19px;background:#d3d3d3"></div>
<div class="a" style="left:84px;top:756px;width:1px;height:19px;background:#b4b4b4"></div>
<div class="a" style="left:156px;top:756px;width:1px;height:19px;background:#b4b4b4"></div>
<div class="t" style="left:92px;width:60px;text-align:right;top:759.55px;font-size:11.4px;line-height:14px;color:#222;">175,50</div>
<div class="t" style="left:163.5px;width:60px;text-align:right;top:759.55px;font-size:11.4px;line-height:14px;color:#222;">0,00</div>
<div class="a" style="left:19px;top:785px;width:211px;height:24px;background:#f8f8f8"></div>
<div class="a" style="left:74px;top:788px;width:1px;height:18px;background:#d8d8d8"></div>
<div class="t" style="left:23px;top:789.98px;font-size:11.6px;line-height:14px;color:#222;letter-spacing:-0.1px">31 Sätze</div>
<div class="a" style="left:270px;top:97px;width:1250px;height:171px;background:#eaeaea;border:1px solid #f2f2f2;border-top-color:#dcdcdc"></div>
<div class="a" style="left:273px;top:93px;width:74px;height:8px;background:#e9e9e9"></div>
<div class="t" style="left:276px;top:91.05px;font-size:11.4px;line-height:14px;color:#222;">Zeit-Eingabe:</div>
<div class="t" style="left:241px;width:120px;text-align:right;top:113.19px;font-size:11px;line-height:14px;color:#262626;letter-spacing:-0.35px">Proj./Vorg.</div>
<div class="a" style="left:378px;top:111px;width:215px;height:19px;background:#fff;border:1px solid #a8a8a8"></div>
<div class="t" style="left:381px;top:113.39px;font-size:11px;line-height:14px;color:#1a1a1a;letter-spacing:-0.3px">V170079</div>
<svg class="a" style="left:580px;top:118px;" width="9" height="6" viewBox="0 0 9 6"><path d="M0.7 0.8L4.5 4.6L8.3 0.8" fill="none" stroke="#6a6a6a" stroke-width="1.1"/></svg>
<div class="t" style="left:243.5px;width:120px;text-align:right;top:138.69px;font-size:11px;line-height:14px;color:#262626;letter-spacing:-0.35px">Mitarbeiter</div>
<div class="a" style="left:378px;top:137px;width:73px;height:19px;background:#fff;border:1px solid #a8a8a8"></div>
<div class="t" style="left:381px;top:139.39px;font-size:11px;line-height:14px;color:#1a1a1a;letter-spacing:-0.3px">2</div>
<svg class="a" style="left:438px;top:144px;" width="9" height="6" viewBox="0 0 9 6"><path d="M0.7 0.8L4.5 4.6L8.3 0.8" fill="none" stroke="#6a6a6a" stroke-width="1.1"/></svg>
<div class="a" style="left:458px;top:137px;width:135px;height:18px;background:#ececec;border:1px solid #b0b0b0"></div>
<div class="t" style="left:461px;top:139.39px;font-size:11px;line-height:14px;color:#1a1a1a;letter-spacing:-0.3px">Schmitt, Karl-Heinz</div>
<div class="t" style="left:244px;width:120px;text-align:right;top:164.19px;font-size:11px;line-height:14px;color:#262626;letter-spacing:-0.35px">Datum</div>
<div class="a" style="left:378px;top:162px;width:186px;height:18px;background:#fff;border:1px solid #a8a8a8"></div>
<div class="t" style="left:381px;top:164.39px;font-size:11px;line-height:14px;color:#1a1a1a;letter-spacing:-0.3px">08.12.2020</div>
<div class="a" style="left:567px;top:161px;width:27px;height:21px;background:#e3e3e3;border:1px solid #cdcdcd"></div>
<svg class="a" style="left:573px;top:166px;" width="14" height="11" viewBox="0 0 14 11"><rect x="0.5" y="0.5" width="13" height="10" rx="1" fill="#c8c8f0" stroke="#4a50a8"/><rect x="0.5" y="0.5" width="13" height="2" fill="#5a6ac8"/><path d="M1 4.5H13M1 7H13M4 3V10M7 3V10M10 3V10" stroke="#f4f4ff" stroke-width="0.9"/><rect x="7.5" y="4.5" width="2.5" height="3.5" fill="#c04060"/><path d="M1 10H13" stroke="#303070"/></svg>
<div class="t" style="left:532px;width:120px;text-align:right;top:113.19px;font-size:11px;line-height:14px;color:#262626;letter-spacing:-0.35px">Von</div>
<div class="a" style="left:665px;top:111px;width:81px;height:18px;background:#efefef;border:1px solid #d9d9d9"></div>
<div class="t" style="left:532px;width:120px;text-align:right;top:138.69px;font-size:11px;line-height:14px;color:#262626;letter-spacing:-0.35px">Bis</div>
<div class="a" style="left:665px;top:136px;width:81px;height:18px;background:#efefef;border:1px solid #d9d9d9"></div>
<div class="t" style="left:532px;width:120px;text-align:right;top:164.19px;font-size:11px;line-height:14px;color:#262626;letter-spacing:-0.35px">Pause</div>
<div class="a" style="left:665px;top:162px;width:81px;height:18px;background:#fff;border:1px solid #a8a8a8"></div>
<div class="t" style="left:668px;top:164.39px;font-size:11px;line-height:14px;color:#1a1a1a;letter-spacing:-0.3px">1,00</div>
<div class="t" style="left:532px;width:120px;text-align:right;top:188.69px;font-size:11px;line-height:14px;color:#262626;letter-spacing:-0.35px">Arbeitszeit</div>
<div class="a" style="left:665px;top:186px;width:81px;height:18px;background:#fff;border:1px solid #a8a8a8"></div>
<div class="t" style="left:668px;top:188.39px;font-size:11px;line-height:14px;color:#1a1a1a;letter-spacing:-0.3px">8,50</div>
<div class="t" style="left:673px;width:120px;text-align:right;top:113.19px;font-size:11px;line-height:14px;color:#262626;letter-spacing:-0.35px">Lohn</div>
<div class="a" style="left:808px;top:111px;width:215px;height:18px;background:#fff;border:1px solid #a8a8a8"></div>
<div class="t" style="left:672px;width:120px;text-align:right;top:138.69px;font-size:11px;line-height:14px;color:#262626;letter-spacing:-0.35px">Lohnart</div>
<div class="a" style="left:808px;top:137px;width:104px;height:19px;background:#fff;border:1px solid #a8a8a8"></div>
<div class="t" style="left:811px;top:139.39px;font-size:11px;line-height:14px;color:#1a1a1a;letter-spacing:-0.3px">1</div>
<svg class="a" style="left:899px;top:144px;" width="9" height="6" viewBox="0 0 9 6"><path d="M0.7 0.8L4.5 4.6L8.3 0.8" fill="none" stroke="#6a6a6a" stroke-width="1.1"/></svg>
<div class="a" style="left:918px;top:137px;width:105px;height:18px;background:#ececec;border:1px solid #b0b0b0"></div>
<div class="t" style="left:921px;top:139.39px;font-size:11px;line-height:14px;color:#1a1a1a;letter-spacing:-0.3px">Lohn</div>
<div class="t" style="left:675.5px;width:120px;text-align:right;top:164.19px;font-size:11px;line-height:14px;color:#262626;letter-spacing:-0.35px">KST</div>
<div class="a" style="left:808px;top:162px;width:104px;height:20px;background:#fff;border:1px solid #a8a8a8"></div>
<div class="t" style="left:811px;top:164.39px;font-size:11px;line-height:14px;color:#1a1a1a;letter-spacing:-0.3px">005</div>
<svg class="a" style="left:899px;top:169px;" width="9" height="6" viewBox="0 0 9 6"><path d="M0.7 0.8L4.5 4.6L8.3 0.8" fill="none" stroke="#6a6a6a" stroke-width="1.1"/></svg>
<div class="a" style="left:918px;top:162px;width:105px;height:18px;background:#ececec;border:1px solid #b0b0b0"></div>
<div class="t" style="left:921px;top:164.39px;font-size:11px;line-height:14px;color:#1a1a1a;letter-spacing:-0.3px">Normalstunden</div>
<div class="t" style="left:676.5px;width:120px;text-align:right;top:188.69px;font-size:11px;line-height:14px;color:#262626;letter-spacing:-0.35px">Multi</div>
<div class="a" style="left:808px;top:186px;width:215px;height:18px;background:#fff;border:1px solid #a8a8a8"></div>
<div class="t" style="left:811px;top:188.39px;font-size:11px;line-height:14px;color:#1a1a1a;letter-spacing:-0.3px">1</div>
<div class="t" style="left:978px;width:120px;text-align:right;top:113.19px;font-size:11px;line-height:14px;color:#262626;letter-spacing:-0.35px">Typ</div>
<div class="a" style="left:1111px;top:111px;width:402px;height:19px;background:#fff;border:1px solid #a8a8a8"></div>
<svg class="a" style="left:1500px;top:118px;" width="9" height="6" viewBox="0 0 9 6"><path d="M0.7 0.8L4.5 4.6L8.3 0.8" fill="none" stroke="#6a6a6a" stroke-width="1.1"/></svg>
<div class="t" style="left:975px;width:120px;text-align:right;top:138.69px;font-size:11px;line-height:14px;color:#262626;letter-spacing:-0.35px">Bemerkung</div>
<div class="a" style="left:1111px;top:137px;width:402px;height:18px;background:#fff;border:1px solid #a8a8a8"></div>
<div class="t" style="left:977px;width:120px;text-align:right;top:164.19px;font-size:11px;line-height:14px;color:#262626;letter-spacing:-0.35px">ÜstKat</div>
<div class="a" style="left:1111px;top:162px;width:80px;height:20px;background:#fff;border:1px solid #3c8fd8"></div>
<svg class="a" style="left:1178px;top:169px;" width="9" height="6" viewBox="0 0 9 6"><path d="M0.7 0.8L4.5 4.6L8.3 0.8" fill="none" stroke="#6a6a6a" stroke-width="1.1"/></svg>
<div class="a" style="left:276px;top:241px;width:27px;height:23px;background:#e3e3e3;border:1px solid #c8c8c8"></div>
<svg class="a" style="left:283px;top:247px;" width="13" height="13" viewBox="0 0 13 13"><path d="M4.5 1.5H8.5V4.5H11.5V8.5H8.5V11.5H4.5V8.5H1.5V4.5H4.5Z" fill="#48d040" stroke="#2a8a2a" stroke-width="1"/></svg>
<div class="a" style="left:1402px;top:233px;width:111px;height:30px;background:#e1e1e1;border:1px solid #adadad"></div>
<div class="t" style="left:1407.5px;width:100px;text-align:center;top:240.69px;font-size:11px;line-height:14px;color:#222;letter-spacing:-0.3px">B<u>u</u>chen</div>
<div class="a" style="left:270px;top:288px;width:1250px;height:517px;background:#eaeaea;border:1px solid #f2f2f2;border-top-color:#dcdcdc"></div>
<div class="a" style="left:273px;top:284px;width:51px;height:8px;background:#e9e9e9"></div>
<div class="t" style="left:276px;top:282.55px;font-size:11.4px;line-height:14px;color:#222;">Anzeige:</div>
<div class="a" style="left:275px;top:301px;width:1239px;height:474px;background:#ababab;border:1px solid #3c3c3c"></div>
<div class="a" style="left:276px;top:302px;width:1237px;height:17px;background:#fff"></div>
<div class="t" style="left:282px;top:305.05px;font-size:11.4px;line-height:14px;color:#222;">Art</div>
<div class="a" style="left:342px;top:305px;width:12px;height:12px;background:#e8e8e8;border:1px solid #c9c9c9"></div>
<svg class="a" style="left:344px;top:309px;" width="8" height="5" viewBox="0 0 8 5"><path d="M0.5 0.5L4 4L7.5 0.5" fill="none" stroke="#777" stroke-width="1"/></svg>
<div class="t" style="left:362px;top:305.05px;font-size:11.4px;line-height:14px;color:#222;">ProjektNr</div>
<div class="a" style="left:448px;top:305px;width:12px;height:12px;background:#e8e8e8;border:1px solid #c9c9c9"></div>
<svg class="a" style="left:450px;top:309px;" width="8" height="5" viewBox="0 0 8 5"><path d="M0.5 0.5L4 4L7.5 0.5" fill="none" stroke="#777" stroke-width="1"/></svg>
<div class="a" style="left:356px;top:302px;width:1px;height:17px;background:#e4e4e4"></div>
<div class="t" style="left:468px;top:305.05px;font-size:11.4px;line-height:14px;color:#222;">Mitarbeiter</div>
<div class="a" style="left:559px;top:305px;width:12px;height:12px;background:#e8e8e8;border:1px solid #c9c9c9"></div>
<svg class="a" style="left:561px;top:309px;" width="8" height="5" viewBox="0 0 8 5"><path d="M0.5 0.5L4 4L7.5 0.5" fill="none" stroke="#777" stroke-width="1"/></svg>
<div class="a" style="left:462px;top:302px;width:1px;height:17px;background:#e4e4e4"></div>
<div class="t" style="left:579px;top:305.05px;font-size:11.4px;line-height:14px;color:#222;">Datum</div>
<div class="a" style="left:684px;top:305px;width:12px;height:12px;background:#e8e8e8;border:1px solid #c9c9c9"></div>
<svg class="a" style="left:686px;top:309px;" width="8" height="5" viewBox="0 0 8 5"><path d="M0.5 0.5L4 4L7.5 0.5" fill="none" stroke="#777" stroke-width="1"/></svg>
<div class="a" style="left:573px;top:302px;width:1px;height:17px;background:#e4e4e4"></div>
<div class="t" style="left:704px;top:305.05px;font-size:11.4px;line-height:14px;color:#222;">Zeit von</div>
<div class="a" style="left:764px;top:305px;width:12px;height:12px;background:#e8e8e8;border:1px solid #c9c9c9"></div>
<svg class="a" style="left:766px;top:309px;" width="8" height="5" viewBox="0 0 8 5"><path d="M0.5 0.5L4 4L7.5 0.5" fill="none" stroke="#777" stroke-width="1"/></svg>
<div class="a" style="left:698px;top:302px;width:1px;height:17px;background:#e4e4e4"></div>
<div class="t" style="left:784px;top:305.05px;font-size:11.4px;line-height:14px;color:#222;">Stunden</div>
<div class="a" style="left:844px;top:305px;width:12px;height:12px;background:#e8e8e8;border:1px solid #c9c9c9"></div>
<svg class="a" style="left:846px;top:309px;" width="8" height="5" viewBox="0 0 8 5"><path d="M0.5 0.5L4 4L7.5 0.5" fill="none" stroke="#777" stroke-width="1"/></svg>
<div class="a" style="left:778px;top:302px;width:1px;height:17px;background:#e4e4e4"></div>
<div class="t" style="left:864px;top:305.05px;font-size:11.4px;line-height:14px;color:#222;">Zeit bis</div>
<div class="a" style="left:924px;top:305px;width:12px;height:12px;background:#e8e8e8;border:1px solid #c9c9c9"></div>
<svg class="a" style="left:926px;top:309px;" width="8" height="5" viewBox="0 0 8 5"><path d="M0.5 0.5L4 4L7.5 0.5" fill="none" stroke="#777" stroke-width="1"/></svg>
<div class="a" style="left:858px;top:302px;width:1px;height:17px;background:#e4e4e4"></div>
<div class="t" style="left:944px;top:305.05px;font-size:11.4px;line-height:14px;color:#222;">Pausen</div>
<div class="a" style="left:1004px;top:305px;width:12px;height:12px;background:#e8e8e8;border:1px solid #c9c9c9"></div>
<svg class="a" style="left:1006px;top:309px;" width="8" height="5" viewBox="0 0 8 5"><path d="M0.5 0.5L4 4L7.5 0.5" fill="none" stroke="#777" stroke-width="1"/></svg>
<div class="a" style="left:938px;top:302px;width:1px;height:17px;background:#e4e4e4"></div>
<div class="t" style="left:1024px;top:305.05px;font-size:11.4px;line-height:14px;color:#222;">Multi</div>
<div class="a" style="left:1084px;top:305px;width:12px;height:12px;background:#e8e8e8;border:1px solid #c9c9c9"></div>
<svg class="a" style="left:1086px;top:309px;" width="8" height="5" viewBox="0 0 8 5"><path d="M0.5 0.5L4 4L7.5 0.5" fill="none" stroke="#777" stroke-width="1"/></svg>
<div class="a" style="left:1018px;top:302px;width:1px;height:17px;background:#e4e4e4"></div>
<div class="t" style="left:1104px;top:305.05px;font-size:11.4px;line-height:14px;color:#222;">Lohnkosten</div>
<div class="a" style="left:1164px;top:305px;width:12px;height:12px;background:#e8e8e8;border:1px solid #c9c9c9"></div>
<svg class="a" style="left:1166px;top:309px;" width="8" height="5" viewBox="0 0 8 5"><path d="M0.5 0.5L4 4L7.5 0.5" fill="none" stroke="#777" stroke-width="1"/></svg>
<div class="a" style="left:1098px;top:302px;width:1px;height:17px;background:#e4e4e4"></div>
<div class="t" style="left:1184px;top:305.05px;font-size:11.4px;line-height:14px;color:#222;">Kostenstelle</div>
<div class="a" style="left:1268px;top:305px;width:12px;height:12px;background:#e8e8e8;border:1px solid #c9c9c9"></div>
<svg class="a" style="left:1270px;top:309px;" width="8" height="5" viewBox="0 0 8 5"><path d="M0.5 0.5L4 4L7.5 0.5" fill="none" stroke="#777" stroke-width="1"/></svg>
<div class="a" style="left:1178px;top:302px;width:1px;height:17px;background:#e4e4e4"></div>
<div class="t" style="left:1288px;top:305.05px;font-size:11.4px;line-height:14px;color:#222;">Lohnart</div>
<div class="a" style="left:1348px;top:305px;width:12px;height:12px;background:#e8e8e8;border:1px solid #c9c9c9"></div>
<svg class="a" style="left:1350px;top:309px;" width="8" height="5" viewBox="0 0 8 5"><path d="M0.5 0.5L4 4L7.5 0.5" fill="none" stroke="#777" stroke-width="1"/></svg>
<div class="a" style="left:1282px;top:302px;width:1px;height:17px;background:#e4e4e4"></div>
<div class="a" style="left:1363px;top:302px;width:79px;height:17px;background:linear-gradient(#fde9ec,#f7bcc6)"></div>
<div class="t" style="left:1361.5px;width:80px;text-align:center;top:303.55px;font-size:11.4px;line-height:14px;color:#222;">ZA</div>
<div class="a" style="left:1362px;top:302px;width:1px;height:17px;background:#e4e4e4"></div>
<div class="a" style="left:1443px;top:302px;width:70px;height:17px;background:linear-gradient(#eef7fb,#c4dde9)"></div>
<div class="t" style="left:1440.75px;width:80px;text-align:center;top:303.55px;font-size:11.4px;line-height:14px;color:#222;">K</div>
<div class="a" style="left:1442px;top:302px;width:1px;height:17px;background:#8a8a8a"></div>
<div class="a" style="left:276px;top:319px;width:1237px;height:19px;background:#0078d7"></div>
<div class="a" style="left:356px;top:319px;width:1px;height:19px;background:#3a8ee0"></div>
<div class="a" style="left:462px;top:319px;width:1px;height:19px;background:#3a8ee0"></div>
<div class="a" style="left:573px;top:319px;width:1px;height:19px;background:#3a8ee0"></div>
<div class="a" style="left:698px;top:319px;width:1px;height:19px;background:#3a8ee0"></div>
<div class="a" style="left:778px;top:319px;width:1px;height:19px;background:#3a8ee0"></div>
<div class="a" style="left:858px;top:319px;width:1px;height:19px;background:#3a8ee0"></div>
<div class="a" style="left:938px;top:319px;width:1px;height:19px;background:#3a8ee0"></div>
<div class="a" style="left:1018px;top:319px;width:1px;height:19px;background:#3a8ee0"></div>
<div class="a" style="left:1098px;top:319px;width:1px;height:19px;background:#3a8ee0"></div>
<div class="a" style="left:1178px;top:319px;width:1px;height:19px;background:#3a8ee0"></div>
<div class="a" style="left:1282px;top:319px;width:1px;height:19px;background:#3a8ee0"></div>
<div class="a" style="left:1362px;top:319px;width:1px;height:19px;background:#3a8ee0"></div>
<div class="a" style="left:1442px;top:319px;width:1px;height:19px;background:#3a8ee0"></div>
<div class="t" style="left:280px;top:322.55px;font-size:11.4px;line-height:14px;color:#fff;">R</div>
<div class="t" style="left:360px;top:322.55px;font-size:11.4px;line-height:14px;color:#fff;">V170072</div>
<div class="t" style="left:466px;top:322.55px;font-size:11.4px;line-height:14px;color:#fff;">Kling, Albrecht</div>
<div class="t" style="left:577px;top:322.55px;font-size:11.4px;line-height:14px;color:#fff;">Mo 30.11.2020</div>
<div class="t" style="left:674px;width:100px;text-align:right;top:322.55px;font-size:11.4px;line-height:14px;color:#fff;">16:30</div>
<div class="t" style="left:754px;width:100px;text-align:right;top:322.55px;font-size:11.4px;line-height:14px;color:#fff;">3,50</div>
<div class="t" style="left:834px;width:100px;text-align:right;top:322.55px;font-size:11.4px;line-height:14px;color:#fff;">20:00</div>
<div class="t" style="left:914px;width:100px;text-align:right;top:322.55px;font-size:11.4px;line-height:14px;color:#fff;">0,00</div>
<div class="t" style="left:994px;width:100px;text-align:right;top:322.55px;font-size:11.4px;line-height:14px;color:#fff;">1,25</div>
<div class="t" style="left:1074px;width:100px;text-align:right;top:322.55px;font-size:11.4px;line-height:14px;color:#fff;">23,17</div>
<div class="a" style="left:1394px;top:322px;width:13px;height:13px;background:#fff;border:1px solid #fff"></div>
<div class="a" style="left:1474px;top:322px;width:13px;height:13px;background:#fff;border:1px solid #fff"></div>
<div class="a" style="left:276px;top:338px;width:1237px;height:19px;background:#fff"></div>
<div class="a" style="left:356px;top:338px;width:1px;height:19px;background:#d2d2d2"></div>
<div class="a" style="left:462px;top:338px;width:1px;height:19px;background:#d2d2d2"></div>
<div class="a" style="left:573px;top:338px;width:1px;height:19px;background:#d2d2d2"></div>
<div class="a" style="left:698px;top:338px;width:1px;height:19px;background:#d2d2d2"></div>
<div class="a" style="left:778px;top:338px;width:1px;height:19px;background:#d2d2d2"></div>
<div class="a" style="left:858px;top:338px;width:1px;height:19px;background:#d2d2d2"></div>
<div class="a" style="left:938px;top:338px;width:1px;height:19px;background:#d2d2d2"></div>
<div class="a" style="left:1018px;top:338px;width:1px;height:19px;background:#d2d2d2"></div>
<div class="a" style="left:1098px;top:338px;width:1px;height:19px;background:#d2d2d2"></div>
<div class="a" style="left:1178px;top:338px;width:1px;height:19px;background:#d2d2d2"></div>
<div class="a" style="left:1282px;top:338px;width:1px;height:19px;background:#d2d2d2"></div>
<div class="a" style="left:1362px;top:338px;width:1px;height:19px;background:#d2d2d2"></div>
<div class="a" style="left:1442px;top:338px;width:1px;height:19px;background:#d2d2d2"></div>
<div class="t" style="left:280px;top:341.75px;font-size:11.4px;line-height:14px;color:#222;">R</div>
<div class="t" style="left:360px;top:341.75px;font-size:11.4px;line-height:14px;color:#222;">V170072</div>
<div class="t" style="left:466px;top:341.75px;font-size:11.4px;line-height:14px;color:#222;">Kling, Albrecht</div>
<div class="t" style="left:577px;top:341.75px;font-size:11.4px;line-height:14px;color:#222;">Mo 30.11.2020</div>
<div class="t" style="left:674px;width:100px;text-align:right;top:341.75px;font-size:11.4px;line-height:14px;color:#222;">07:00</div>
<div class="t" style="left:754px;width:100px;text-align:right;top:341.75px;font-size:11.4px;line-height:14px;color:#222;">8,50</div>
<div class="t" style="left:834px;width:100px;text-align:right;top:341.75px;font-size:11.4px;line-height:14px;color:#222;">16:30</div>
<div class="t" style="left:914px;width:100px;text-align:right;top:341.75px;font-size:11.4px;line-height:14px;color:#222;">1,00</div>
<div class="t" style="left:994px;width:100px;text-align:right;top:341.75px;font-size:11.4px;line-height:14px;color:#222;">1,00</div>
<div class="t" style="left:1074px;width:100px;text-align:right;top:341.75px;font-size:11.4px;line-height:14px;color:#222;">23,17</div>
<div class="t" style="left:1178px;width:100px;text-align:right;top:341.75px;font-size:11.4px;line-height:14px;color:#222;">005</div>
<div class="t" style="left:1258px;width:100px;text-align:right;top:341.75px;font-size:11.4px;line-height:14px;color:#222;">1</div>
<div class="a" style="left:1394px;top:341px;width:13px;height:13px;background:#fff;border:1px solid #6e6e6e"></div>
<div class="a" style="left:1474px;top:341px;width:13px;height:13px;background:#fff;border:1px solid #6e6e6e"></div>
<div class="a" style="left:276px;top:357px;width:1237px;height:20px;background:#fff"></div>
<div class="a" style="left:276px;top:357px;width:1237px;height:1px;background:#c6c6c6"></div>
<div class="a" style="left:356px;top:357px;width:1px;height:20px;background:#d2d2d2"></div>
<div class="a" style="left:462px;top:357px;width:1px;height:20px;background:#d2d2d2"></div>
<div class="a" style="left:573px;top:357px;width:1px;height:20px;background:#d2d2d2"></div>
<div class="a" style="left:698px;top:357px;width:1px;height:20px;background:#d2d2d2"></div>
<div class="a" style="left:778px;top:357px;width:1px;height:20px;background:#d2d2d2"></div>
<div class="a" style="left:858px;top:357px;width:1px;height:20px;background:#d2d2d2"></div>
<div class="a" style="left:938px;top:357px;width:1px;height:20px;background:#d2d2d2"></div>
<div class="a" style="left:1018px;top:357px;width:1px;height:20px;background:#d2d2d2"></div>
<div class="a" style="left:1098px;top:357px;width:1px;height:20px;background:#d2d2d2"></div>
<div class="a" style="left:1178px;top:357px;width:1px;height:20px;background:#d2d2d2"></div>
<div class="a" style="left:1282px;top:357px;width:1px;height:20px;background:#d2d2d2"></div>
<div class="a" style="left:1362px;top:357px;width:1px;height:20px;background:#d2d2d2"></div>
<div class="a" style="left:1442px;top:357px;width:1px;height:20px;background:#d2d2d2"></div>
<div class="t" style="left:280px;top:360.95px;font-size:11.4px;line-height:14px;color:#222;">R</div>
<div class="t" style="left:360px;top:360.95px;font-size:11.4px;line-height:14px;color:#222;">V170072</div>
<div class="t" style="left:466px;top:360.95px;font-size:11.4px;line-height:14px;color:#222;">Kling, Albrecht</div>
<div class="t" style="left:577px;top:360.95px;font-size:11.4px;line-height:14px;color:#222;">Mo 30.11.2020</div>
<div class="t" style="left:674px;width:100px;text-align:right;top:360.95px;font-size:11.4px;line-height:14px;color:#222;">14:50</div>
<div class="t" style="left:754px;width:100px;text-align:right;top:360.95px;font-size:11.4px;line-height:14px;color:#222;">0,00</div>
<div class="t" style="left:834px;width:100px;text-align:right;top:360.95px;font-size:11.4px;line-height:14px;color:#222;">14:50</div>
<div class="t" style="left:914px;width:100px;text-align:right;top:360.95px;font-size:11.4px;line-height:14px;color:#222;">0,00</div>
<div class="t" style="left:994px;width:100px;text-align:right;top:360.95px;font-size:11.4px;line-height:14px;color:#222;">1,00</div>
<div class="t" style="left:1074px;width:100px;text-align:right;top:360.95px;font-size:11.4px;line-height:14px;color:#222;">23,17</div>
<div class="t" style="left:1178px;width:100px;text-align:right;top:360.95px;font-size:11.4px;line-height:14px;color:#222;">005</div>
<div class="t" style="left:1258px;width:100px;text-align:right;top:360.95px;font-size:11.4px;line-height:14px;color:#222;">1</div>
<div class="a" style="left:1394px;top:360px;width:13px;height:13px;background:#fff;border:1px solid #6e6e6e"></div>
<div class="a" style="left:1474px;top:360px;width:13px;height:13px;background:#fff;border:1px solid #6e6e6e"></div>
<div class="a" style="left:276px;top:377px;width:1237px;height:19px;background:#fff"></div>
<div class="a" style="left:276px;top:377px;width:1237px;height:1px;background:#c6c6c6"></div>
<div class="a" style="left:356px;top:377px;width:1px;height:19px;background:#d2d2d2"></div>
<div class="a" style="left:462px;top:377px;width:1px;height:19px;background:#d2d2d2"></div>
<div class="a" style="left:573px;top:377px;width:1px;height:19px;background:#d2d2d2"></div>
<div class="a" style="left:698px;top:377px;width:1px;height:19px;background:#d2d2d2"></div>
<div class="a" style="left:778px;top:377px;width:1px;height:19px;background:#d2d2d2"></div>
<div class="a" style="left:858px;top:377px;width:1px;height:19px;background:#d2d2d2"></div>
<div class="a" style="left:938px;top:377px;width:1px;height:19px;background:#d2d2d2"></div>
<div class="a" style="left:1018px;top:377px;width:1px;height:19px;background:#d2d2d2"></div>
<div class="a" style="left:1098px;top:377px;width:1px;height:19px;background:#d2d2d2"></div>
<div class="a" style="left:1178px;top:377px;width:1px;height:19px;background:#d2d2d2"></div>
<div class="a" style="left:1282px;top:377px;width:1px;height:19px;background:#d2d2d2"></div>
<div class="a" style="left:1362px;top:377px;width:1px;height:19px;background:#d2d2d2"></div>
<div class="a" style="left:1442px;top:377px;width:1px;height:19px;background:#d2d2d2"></div>
<div class="t" style="left:280px;top:380.15px;font-size:11.4px;line-height:14px;color:#222;">R</div>
<div class="t" style="left:360px;top:380.15px;font-size:11.4px;line-height:14px;color:#222;">V170069</div>
<div class="t" style="left:466px;top:380.15px;font-size:11.4px;line-height:14px;color:#222;">Stahl, Florian</div>
<div class="t" style="left:577px;top:380.15px;font-size:11.4px;line-height:14px;color:#222;">Mo 30.11.2020</div>
<div class="t" style="left:674px;width:100px;text-align:right;top:380.15px;font-size:11.4px;line-height:14px;color:#222;">14:49</div>
<div class="t" style="left:754px;width:100px;text-align:right;top:380.15px;font-size:11.4px;line-height:14px;color:#222;">0,00</div>
<div class="t" style="left:834px;width:100px;text-align:right;top:380.15px;font-size:11.4px;line-height:14px;color:#222;">14:49</div>
<div class="t" style="left:914px;width:100px;text-align:right;top:380.15px;font-size:11.4px;line-height:14px;color:#222;">0,00</div>
<div class="t" style="left:994px;width:100px;text-align:right;top:380.15px;font-size:11.4px;line-height:14px;color:#222;">1,00</div>
<div class="t" style="left:1074px;width:100px;text-align:right;top:380.15px;font-size:11.4px;line-height:14px;color:#222;">22,63</div>
<div class="t" style="left:1178px;width:100px;text-align:right;top:380.15px;font-size:11.4px;line-height:14px;color:#222;">005</div>
<div class="t" style="left:1258px;width:100px;text-align:right;top:380.15px;font-size:11.4px;line-height:14px;color:#222;">1</div>
<div class="a" style="left:1394px;top:380px;width:13px;height:13px;background:#fff;border:1px solid #6e6e6e"></div>
<div class="a" style="left:1474px;top:380px;width:13px;height:13px;background:#fff;border:1px solid #6e6e6e"></div>
<div class="a" style="left:276px;top:396px;width:1237px;height:19px;background:#fff"></div>
<div class="a" style="left:276px;top:396px;width:1237px;height:1px;background:#c6c6c6"></div>
<div class="a" style="left:356px;top:396px;width:1px;height:19px;background:#d2d2d2"></div>
<div class="a" style="left:462px;top:396px;width:1px;height:19px;background:#d2d2d2"></div>
<div class="a" style="left:573px;top:396px;width:1px;height:19px;background:#d2d2d2"></div>
<div class="a" style="left:698px;top:396px;width:1px;height:19px;background:#d2d2d2"></div>
<div class="a" style="left:778px;top:396px;width:1px;height:19px;background:#d2d2d2"></div>
<div class="a" style="left:858px;top:396px;width:1px;height:19px;background:#d2d2d2"></div>
<div class="a" style="left:938px;top:396px;width:1px;height:19px;background:#d2d2d2"></div>
<div class="a" style="left:1018px;top:396px;width:1px;height:19px;background:#d2d2d2"></div>
<div class="a" style="left:1098px;top:396px;width:1px;height:19px;background:#d2d2d2"></div>
<div class="a" style="left:1178px;top:396px;width:1px;height:19px;background:#d2d2d2"></div>
<div class="a" style="left:1282px;top:396px;width:1px;height:19px;background:#d2d2d2"></div>
<div class="a" style="left:1362px;top:396px;width:1px;height:19px;background:#d2d2d2"></div>
<div class="a" style="left:1442px;top:396px;width:1px;height:19px;background:#d2d2d2"></div>
<div class="t" style="left:280px;top:399.35px;font-size:11.4px;line-height:14px;color:#222;">R</div>
<div class="t" style="left:360px;top:399.35px;font-size:11.4px;line-height:14px;color:#222;">V170068</div>
<div class="t" style="left:466px;top:399.35px;font-size:11.4px;line-height:14px;color:#222;">Stahl, Florian</div>
<div class="t" style="left:577px;top:399.35px;font-size:11.4px;line-height:14px;color:#222;">Mo 30.11.2020</div>
<div class="t" style="left:674px;width:100px;text-align:right;top:399.35px;font-size:11.4px;line-height:14px;color:#222;">14:49</div>
<div class="t" style="left:754px;width:100px;text-align:right;top:399.35px;font-size:11.4px;line-height:14px;color:#222;">0,05</div>
<div class="t" style="left:834px;width:100px;text-align:right;top:399.35px;font-size:11.4px;line-height:14px;color:#222;">14:52</div>
<div class="t" style="left:914px;width:100px;text-align:right;top:399.35px;font-size:11.4px;line-height:14px;color:#222;">0,00</div>
<div class="t" style="left:994px;width:100px;text-align:right;top:399.35px;font-size:11.4px;line-height:14px;color:#222;">1,00</div>
<div class="t" style="left:1074px;width:100px;text-align:right;top:399.35px;font-size:11.4px;line-height:14px;color:#222;">22,63</div>
<div class="t" style="left:1178px;width:100px;text-align:right;top:399.35px;font-size:11.4px;line-height:14px;color:#222;">005</div>
<div class="t" style="left:1258px;width:100px;text-align:right;top:399.35px;font-size:11.4px;line-height:14px;color:#222;">1</div>
<div class="a" style="left:1394px;top:399px;width:13px;height:13px;background:#fff;border:1px solid #6e6e6e"></div>
<div class="a" style="left:1474px;top:399px;width:13px;height:13px;background:#fff;border:1px solid #6e6e6e"></div>
<div class="a" style="left:276px;top:415px;width:1237px;height:19px;background:#fff"></div>
<div class="a" style="left:276px;top:415px;width:1237px;height:1px;background:#c6c6c6"></div>
<div class="a" style="left:356px;top:415px;width:1px;height:19px;background:#d2d2d2"></div>
<div class="a" style="left:462px;top:415px;width:1px;height:19px;background:#d2d2d2"></div>
<div class="a" style="left:573px;top:415px;width:1px;height:19px;background:#d2d2d2"></div>
<div class="a" style="left:698px;top:415px;width:1px;height:19px;background:#d2d2d2"></div>
<div class="a" style="left:778px;top:415px;width:1px;height:19px;background:#d2d2d2"></div>
<div class="a" style="left:858px;top:415px;width:1px;height:19px;background:#d2d2d2"></div>
<div class="a" style="left:938px;top:415px;width:1px;height:19px;background:#d2d2d2"></div>
<div class="a" style="left:1018px;top:415px;width:1px;height:19px;background:#d2d2d2"></div>
<div class="a" style="left:1098px;top:415px;width:1px;height:19px;background:#d2d2d2"></div>
<div class="a" style="left:1178px;top:415px;width:1px;height:19px;background:#d2d2d2"></div>
<div class="a" style="left:1282px;top:415px;width:1px;height:19px;background:#d2d2d2"></div>
<div class="a" style="left:1362px;top:415px;width:1px;height:19px;background:#d2d2d2"></div>
<div class="a" style="left:1442px;top:415px;width:1px;height:19px;background:#d2d2d2"></div>
<div class="t" style="left:466px;top:418.55px;font-size:11.4px;line-height:14px;color:#222;">Stahl, Florian</div>
<div class="t" style="left:577px;top:418.55px;font-size:11.4px;line-height:14px;color:#222;">Mo 30.11.2020</div>
<div class="t" style="left:674px;width:100px;text-align:right;top:418.55px;font-size:11.4px;line-height:14px;color:#222;">14:48</div>
<div class="t" style="left:754px;width:100px;text-align:right;top:418.55px;font-size:11.4px;line-height:14px;color:#222;">0,02</div>
<div class="t" style="left:834px;width:100px;text-align:right;top:418.55px;font-size:11.4px;line-height:14px;color:#222;">14:49</div>
<div class="t" style="left:914px;width:100px;text-align:right;top:418.55px;font-size:11.4px;line-height:14px;color:#222;">0,00</div>
<div class="t" style="left:994px;width:100px;text-align:right;top:418.55px;font-size:11.4px;line-height:14px;color:#222;">1,00</div>
<div class="t" style="left:1074px;width:100px;text-align:right;top:418.55px;font-size:11.4px;line-height:14px;color:#222;">22,63</div>
<div class="t" style="left:1178px;width:100px;text-align:right;top:418.55px;font-size:11.4px;line-height:14px;color:#222;">006</div>
<div class="t" style="left:1258px;width:100px;text-align:right;top:418.55px;font-size:11.4px;line-height:14px;color:#222;">1</div>
<div class="a" style="left:1394px;top:418px;width:13px;height:13px;background:#fff;border:1px solid #6e6e6e"></div>
<div class="a" style="left:1474px;top:418px;width:13px;height:13px;background:#fff;border:1px solid #6e6e6e"></div>
<div class="a" style="left:276px;top:434px;width:1237px;height:19px;background:#fff"></div>
<div class="a" style="left:276px;top:434px;width:1237px;height:1px;background:#c6c6c6"></div>
<div class="a" style="left:356px;top:434px;width:1px;height:19px;background:#d2d2d2"></div>
<div class="a" style="left:462px;top:434px;width:1px;height:19px;background:#d2d2d2"></div>
<div class="a" style="left:573px;top:434px;width:1px;height:19px;background:#d2d2d2"></div>
<div class="a" style="left:698px;top:434px;width:1px;height:19px;background:#d2d2d2"></div>
<div class="a" style="left:778px;top:434px;width:1px;height:19px;background:#d2d2d2"></div>
<div class="a" style="left:858px;top:434px;width:1px;height:19px;background:#d2d2d2"></div>
<div class="a" style="left:938px;top:434px;width:1px;height:19px;background:#d2d2d2"></div>
<div class="a" style="left:1018px;top:434px;width:1px;height:19px;background:#d2d2d2"></div>
<div class="a" style="left:1098px;top:434px;width:1px;height:19px;background:#d2d2d2"></div>
<div class="a" style="left:1178px;top:434px;width:1px;height:19px;background:#d2d2d2"></div>
<div class="a" style="left:1282px;top:434px;width:1px;height:19px;background:#d2d2d2"></div>
<div class="a" style="left:1362px;top:434px;width:1px;height:19px;background:#d2d2d2"></div>
<div class="a" style="left:1442px;top:434px;width:1px;height:19px;background:#d2d2d2"></div>
<div class="t" style="left:280px;top:437.75px;font-size:11.4px;line-height:14px;color:#222;">P</div>
<div class="t" style="left:360px;top:437.75px;font-size:11.4px;line-height:14px;color:#222;">P050039</div>
<div class="t" style="left:466px;top:437.75px;font-size:11.4px;line-height:14px;color:#222;">Stahl, Florian</div>
<div class="t" style="left:577px;top:437.75px;font-size:11.4px;line-height:14px;color:#222;">Fr 28.08.2020</div>
<div class="t" style="left:674px;width:100px;text-align:right;top:437.75px;font-size:11.4px;line-height:14px;color:#222;">07:00</div>
<div class="t" style="left:754px;width:100px;text-align:right;top:437.75px;font-size:11.4px;line-height:14px;color:#222;">6,00</div>
<div class="t" style="left:834px;width:100px;text-align:right;top:437.75px;font-size:11.4px;line-height:14px;color:#222;">13:30</div>
<div class="t" style="left:914px;width:100px;text-align:right;top:437.75px;font-size:11.4px;line-height:14px;color:#222;">0,50</div>
<div class="t" style="left:994px;width:100px;text-align:right;top:437.75px;font-size:11.4px;line-height:14px;color:#222;">1,00</div>
<div class="t" style="left:1074px;width:100px;text-align:right;top:437.75px;font-size:11.4px;line-height:14px;color:#222;">22,63</div>
<div class="t" style="left:1178px;width:100px;text-align:right;top:437.75px;font-size:11.4px;line-height:14px;color:#222;">002</div>
<div class="t" style="left:1258px;width:100px;text-align:right;top:437.75px;font-size:11.4px;line-height:14px;color:#222;">1</div>
<div class="a" style="left:1394px;top:437px;width:13px;height:13px;background:#fff;border:1px solid #6e6e6e"></div>
<div class="a" style="left:1474px;top:437px;width:13px;height:13px;background:#fff;border:1px solid #6e6e6e"></div>
<div class="a" style="left:276px;top:453px;width:1237px;height:20px;background:#fff"></div>
<div class="a" style="left:276px;top:453px;width:1237px;height:1px;background:#c6c6c6"></div>
<div class="a" style="left:356px;top:453px;width:1px;height:20px;background:#d2d2d2"></div>
<div class="a" style="left:462px;top:453px;width:1px;height:20px;background:#d2d2d2"></div>
<div class="a" style="left:573px;top:453px;width:1px;height:20px;background:#d2d2d2"></div>
<div class="a" style="left:698px;top:453px;width:1px;height:20px;background:#d2d2d2"></div>
<div class="a" style="left:778px;top:453px;width:1px;height:20px;background:#d2d2d2"></div>
<div class="a" style="left:858px;top:453px;width:1px;height:20px;background:#d2d2d2"></div>
<div class="a" style="left:938px;top:453px;width:1px;height:20px;background:#d2d2d2"></div>
<div class="a" style="left:1018px;top:453px;width:1px;height:20px;background:#d2d2d2"></div>
<div class="a" style="left:1098px;top:453px;width:1px;height:20px;background:#d2d2d2"></div>
<div class="a" style="left:1178px;top:453px;width:1px;height:20px;background:#d2d2d2"></div>
<div class="a" style="left:1282px;top:453px;width:1px;height:20px;background:#d2d2d2"></div>
<div class="a" style="left:1362px;top:453px;width:1px;height:20px;background:#d2d2d2"></div>
<div class="a" style="left:1442px;top:453px;width:1px;height:20px;background:#d2d2d2"></div>
<div class="t" style="left:280px;top:456.95px;font-size:11.4px;line-height:14px;color:#222;">P</div>
<div class="t" style="left:360px;top:456.95px;font-size:11.4px;line-height:14px;color:#222;">P050039</div>
<div class="t" style="left:466px;top:456.95px;font-size:11.4px;line-height:14px;color:#222;">Stahl, Florian</div>
<div class="t" style="left:577px;top:456.95px;font-size:11.4px;line-height:14px;color:#222;">Fr 28.08.2020</div>
<div class="t" style="left:674px;width:100px;text-align:right;top:456.95px;font-size:11.4px;line-height:14px;color:#222;">13:30</div>
<div class="t" style="left:754px;width:100px;text-align:right;top:456.95px;font-size:11.4px;line-height:14px;color:#222;">6,50</div>
<div class="t" style="left:834px;width:100px;text-align:right;top:456.95px;font-size:11.4px;line-height:14px;color:#222;">20:00</div>
<div class="t" style="left:914px;width:100px;text-align:right;top:456.95px;font-size:11.4px;line-height:14px;color:#222;">0,00</div>
<div class="t" style="left:994px;width:100px;text-align:right;top:456.95px;font-size:11.4px;line-height:14px;color:#222;">1,25</div>
<div class="t" style="left:1074px;width:100px;text-align:right;top:456.95px;font-size:11.4px;line-height:14px;color:#222;">22,63</div>
<div class="a" style="left:1394px;top:456px;width:13px;height:13px;background:#fff;border:1px solid #6e6e6e"></div>
<div class="a" style="left:1474px;top:456px;width:13px;height:13px;background:#fff;border:1px solid #6e6e6e"></div>
<div class="a" style="left:276px;top:757px;width:1237px;height:17px;background:#f0f0f0"></div>
<div class="a" style="left:293px;top:758px;width:824px;height:15px;background:#cdcdcd"></div>
<svg class="a" style="left:281px;top:761px;" width="8" height="10" viewBox="0 0 8 10"><path d="M6 1L2 5L6 9" fill="none" stroke="#555" stroke-width="1.6"/></svg>
<svg class="a" style="left:1500px;top:761px;" width="8" height="10" viewBox="0 0 8 10"><path d="M2 1L6 5L2 9" fill="none" stroke="#555" stroke-width="1.6"/></svg>
<div class="a" style="left:275px;top:779px;width:1238px;height:22px;background:#f8f8f8"></div>
<div class="t" style="left:279px;top:783.98px;font-size:11.6px;line-height:14px;color:#222;letter-spacing:-0.1px">8 Sätze</div>
<div class="a" style="left:323px;top:781px;width:1px;height:19px;background:#d6d6d6"></div>
<div class="a" style="left:329px;top:789px;width:11px;height:5px;background:#e04a2a;border:1px solid #a83a20"></div>
<svg class="a" style="left:347px;top:786px;" width="11" height="10" viewBox="0 0 11 10"><rect x="0" y="0" width="11" height="10" rx="1.5" fill="#2e9a3e"/><path d="M3 3.5A3 3 0 0 1 8.5 4M8 6.5A3 3 0 0 1 2.5 6" fill="none" stroke="#fff" stroke-width="1.2"/></svg>
<div class="a" style="left:365px;top:781px;width:1px;height:19px;background:#d6d6d6"></div>
<div class="t" style="left:371px;top:783.34px;font-size:12px;line-height:15px;color:#222;letter-spacing:-0.1px">Filter: -kein Filter</div>
<div class="a" style="left:464px;top:781px;width:1px;height:19px;background:#d6d6d6"></div>
<svg class="a" style="left:469px;top:784px;" width="13" height="12" viewBox="0 0 13 12"><path d="M3.5 0.5H12.5V11.5H1.5V3.5Z" fill="#e6f2e2" stroke="#4a9a4a" stroke-width="1"/><path d="M3.5 3.5L9.5 9.5M9.5 3.5L3.5 9.5" stroke="#1a5a1a" stroke-width="1.5"/></svg>
<svg class="a" style="left:1349px;top:784px;" width="12" height="12" viewBox="0 0 12 12"><path d="M1 1L11 11M11 1L1 11" stroke="#d23a2a" stroke-width="1.5"/></svg>
<div class="t" style="left:1307px;width:200px;text-align:right;top:783.43px;font-size:11.75px;line-height:15px;color:#222;">Zeiten Stapelweise löschen</div>
<div class="a" style="left:0px;top:823px;width:1536px;height:1px;background:#d6dde4"></div>
<div class="a" style="left:0px;top:824px;width:1536px;height:40px;background:#223344"></div>
<div class="a" style="left:48px;top:824px;width:344px;height:40px;background:#f0f0f0;border-top:1px solid #dadada"></div>
<svg class="a" style="left:16px;top:836px;" width="17" height="17" viewBox="0 0 17 17"><path d="M0 2.3L6.8 1.4V8H0ZM7.7 1.3L17 0V8H7.7ZM0 9H6.8V15.6L0 14.7ZM7.7 9H17V17L7.7 15.7Z" fill="#fff"/></svg>
<svg class="a" style="left:60px;top:834px;" width="18" height="18" viewBox="0 0 18 18"><circle cx="11" cy="7" r="5.5" fill="none" stroke="#222" stroke-width="1.5"/><path d="M7 11L1 17" stroke="#222" stroke-width="1.6"/></svg>
<div class="t" style="left:88px;top:835.30px;font-size:15px;line-height:19px;color:#3c3c3c;">Zur Suche Text hier eingeben</div>
<svg class="a" style="left:407px;top:835px;" width="18" height="18" viewBox="0 0 18 18"><circle cx="9" cy="9" r="7" fill="none" stroke="#fff" stroke-width="1.8"/></svg>
<svg class="a" style="left:455px;top:835px;" width="18" height="17" viewBox="0 0 18 17"><g shape-rendering="crispEdges" fill="#fff"><rect x="1" y="1" width="11" height="1"/><rect x="1" y="15" width="11" height="1"/><rect x="2" y="3" width="1" height="11"/><rect x="10" y="3" width="1" height="11"/><rect x="2" y="3" width="9" height="1"/><rect x="2" y="13" width="9" height="1"/><rect x="16" y="0" width="1" height="17"/><rect x="15" y="7" width="3" height="3"/></g></svg>
<svg class="a" style="left:504px;top:833px;" width="22" height="19" viewBox="0 0 22 19"><path d="M0 2H8L10 4H22V19H0Z" fill="#f4c33c"/><path d="M0 6H22V19H0Z" fill="#ffd45a"/><path d="M5 12H17V19H14V15H8V19H5Z" fill="#3a8ed8"/></svg>
<svg class="a" style="left:553px;top:832px;" width="23" height="24" viewBox="0 0 23 24"><path d="M7.5 7V4.5Q7.5 1.5 10.5 1.5H12.5Q15.5 1.5 15.5 4.5V7" fill="none" stroke="#f5f5f5" stroke-width="1.8"/><rect x="0" y="6" width="23" height="18" fill="#f5f5f5"/><rect x="7" y="11" width="4" height="4" fill="#f35325"/><rect x="12" y="11" width="4" height="4" fill="#81bc06"/><rect x="7" y="16" width="4" height="4" fill="#05a6f0"/><rect x="12" y="16" width="4" height="4" fill="#ffba08"/></svg>
<svg class="a" style="left:602px;top:832px;" width="25" height="25" viewBox="0 0 25 25"><defs><linearGradient id="eg" x1="0" y1="0.2" x2="1" y2="0.6"><stop offset="0" stop-color="#1d8ae8"/><stop offset="0.45" stop-color="#2cbde6"/><stop offset="1" stop-color="#66dc5e"/></linearGradient><clipPath id="ec"><circle cx="12.5" cy="12.2" r="12"/></clipPath></defs><g clip-path="url(#ec)"><rect width="25" height="25" fill="url(#eg)"/><path d="M0 12C3 9 8 8.5 11 9.5C9 11 8.5 14.5 11 17C14 19.5 18 20.5 22.5 20V25H0Z" fill="#0d62c4" opacity="0.85"/><path d="M9.8 12.5C9.8 10 11.5 9.2 13.5 9.5C15.5 10 16 12 15 14.5C16.5 16.5 20 17 25 15V25H22.5V20C18 20.5 14 19.5 11.5 17C10.3 15.6 9.8 14 9.8 12.5Z" fill="#15222e"/><path d="M22.5 20V25H25V15Z" fill="#223344"/></g></svg>
<div class="a" style="left:640px;top:824px;width:48px;height:40px;background:#3b4a58"></div>
<div class="a" style="left:641px;top:861px;width:47px;height:3px;background:#8cbbe6"></div>
<div class="a" style="left:653px;top:832px;width:23px;height:23px;background:#fff"></div>
<div class="a" style="left:659px;top:839px;width:9px;height:9px;background:#0000e0"></div>
<svg class="a" style="left:1224px;top:839px;" width="13" height="8" viewBox="0 0 13 8"><path d="M0.8 7L6.5 1.2L12.2 7" fill="none" stroke="#fff" stroke-width="1.3"/></svg>
<svg class="a" style="left:1253px;top:837px;" width="19" height="11" viewBox="0 0 19 11"><path d="M4 11A4 4 0 0 1 3.5 3.5A5.5 5.5 0 0 1 13 2.5A4 4 0 0 1 15.5 11Z" fill="#e8e8e8"/></svg>
<svg class="a" style="left:1286px;top:837px;" width="17" height="12" viewBox="0 0 17 12"><rect x="2.5" y="2.5" width="13" height="8" fill="none" stroke="#fff" stroke-width="1.2"/><rect x="4" y="4" width="10" height="5" fill="#fff"/><path d="M0 3H3" stroke="#fff"/></svg>
<svg class="a" style="left:1317px;top:836px;" width="17" height="14" viewBox="0 0 17 14"><path d="M1 5H4L8 1.5V12.5L4 9H1Z" fill="none" stroke="#fff" stroke-width="1.1"/><path d="M11 4.5A3.5 3.5 0 0 1 11 9.5M13.5 2.5A6 6 0 0 1 13.5 11.5" fill="none" stroke="#fff" stroke-width="1.1"/></svg>
<svg class="a" style="left:1349px;top:836px;" width="18" height="13" viewBox="0 0 18 13"><path d="M4 13A4 4 0 0 1 3.5 5A6 6 0 0 1 14 4A4.5 4.5 0 0 1 14.5 13Z" fill="#fff"/><path d="M9 11V6M6.5 8.5L9 6L11.5 8.5" fill="none" stroke="#223344" stroke-width="1.6"/></svg>
<svg class="a" style="left:1386px;top:835px;" width="18" height="17" viewBox="0 0 18 17"><path d="M2 15C5 13 7 9 9 5C10 3 12 2 12.5 4C13 6 10 9 8 12C7 14 9 14 11 12" fill="none" stroke="#fff" stroke-width="1.2"/><path d="M9 9L16 8" stroke="#fff" stroke-width="1.1"/></svg>
<div class="t" style="left:1408.5px;width:80px;text-align:center;top:827.84px;font-size:12px;line-height:15px;color:#fff;">13:53</div>
<div class="t" style="left:1398.5px;width:100px;text-align:center;top:846.34px;font-size:12px;line-height:15px;color:#fff;letter-spacing:-0.35px">08.12.2020</div>
<svg class="a" style="left:1494px;top:835px;" width="27" height="26" viewBox="0 0 27 26"><path d="M1 1H17.5V14H9L5.5 17V14H1Z" fill="#fff"/><path d="M4 5H14.5M4 7.5H14.5M4 10H12" stroke="#5a6470" stroke-width="1"/><circle cx="17" cy="17" r="7.5" fill="#1d242c" stroke="#7a7f86" stroke-width="1"/></svg>
<div class="a" style="left:1531px;top:824px;width:1px;height:40px;background:#4e5c6a"></div>
<div class="t" style="left:1501.0px;width:20px;text-align:center;top:845.69px;font-size:11px;line-height:14px;color:#fff;font-weight:bold">6</div>
</body></html>
